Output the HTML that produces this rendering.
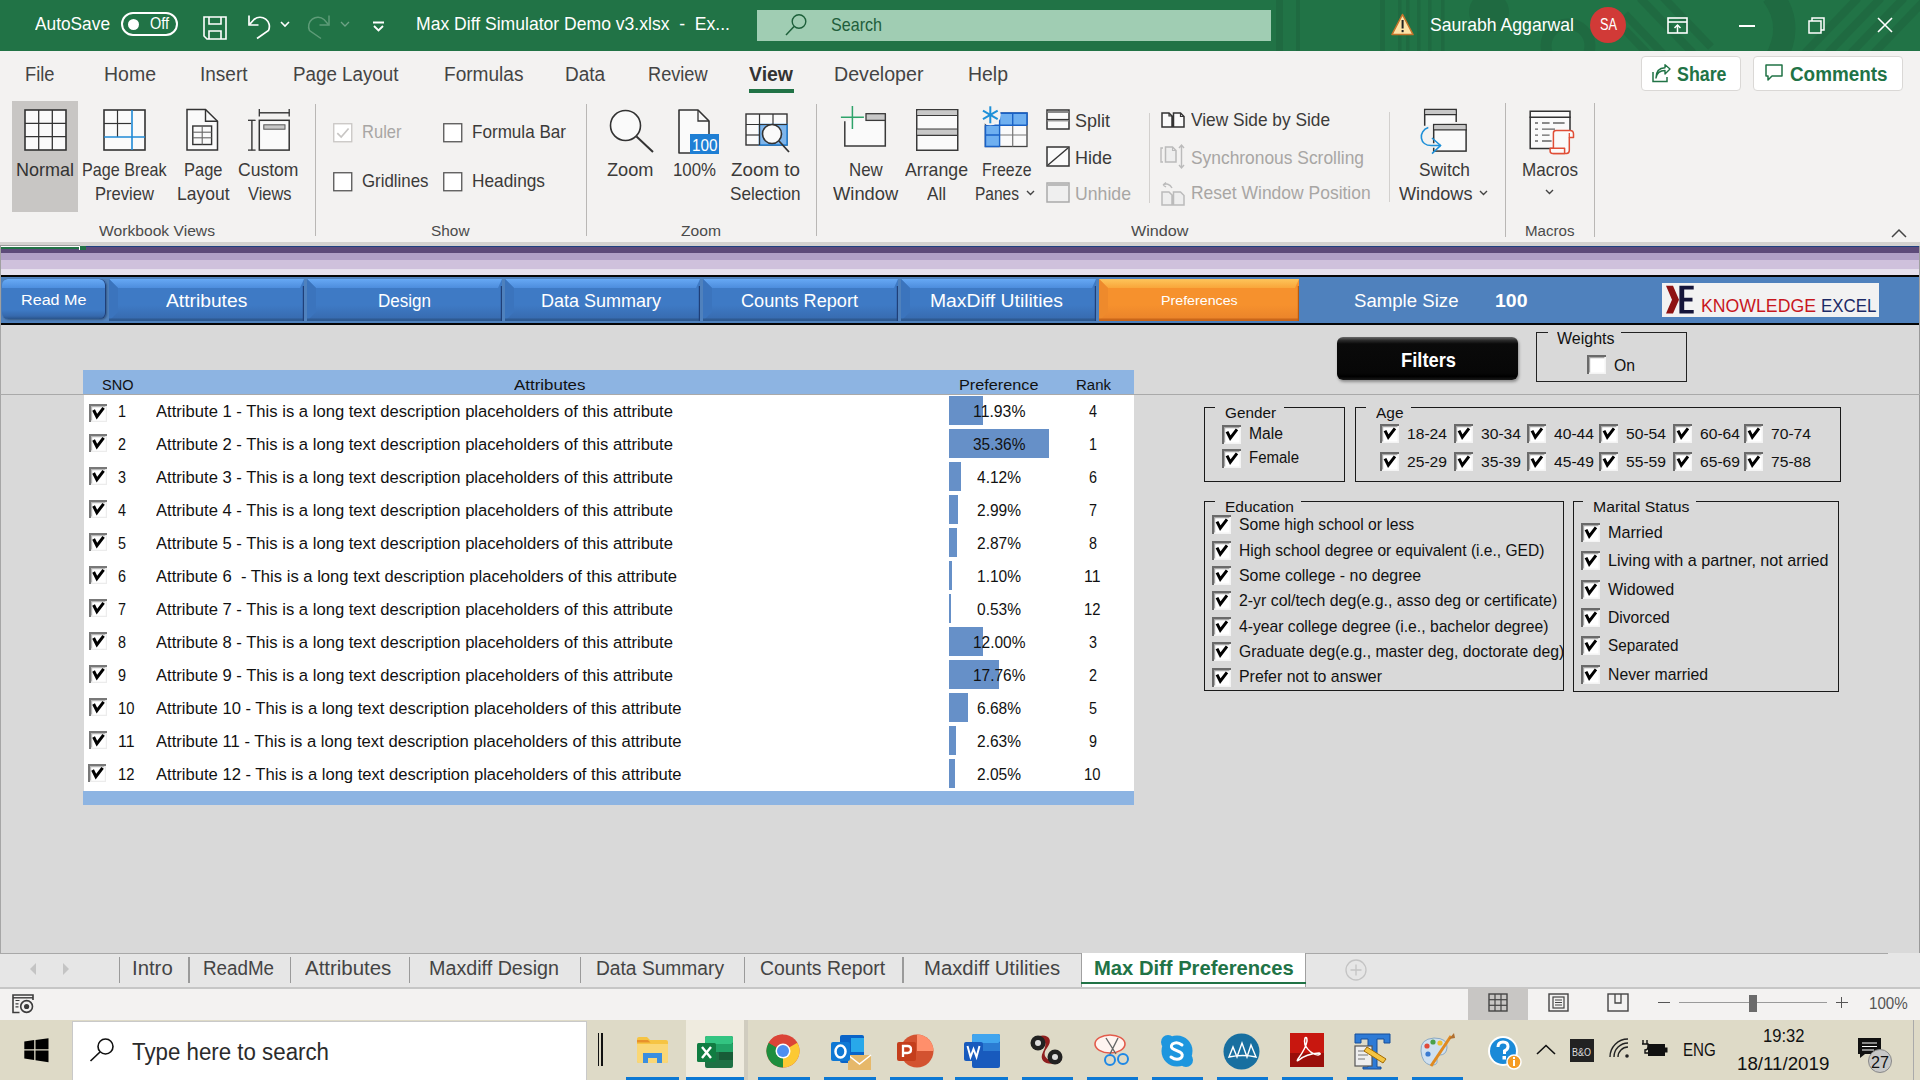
<!DOCTYPE html><html><head><meta charset="utf-8"><style>
html,body{margin:0;padding:0;width:1920px;height:1080px;overflow:hidden;background:#d9d9d9;font-family:"Liberation Sans",sans-serif;}
.t{position:absolute;white-space:pre;line-height:1;transform-origin:0 0;}
svg{overflow:visible}
</style></head><body>
<div style="position:absolute;left:0px;top:0px;width:1920px;height:51px;background:#217346"></div>
<svg style="position:absolute;left:0px;top:0px;" width="1920" height="51" viewBox="0 0 1920 51">
<g fill="#1f6a41">
<rect x="1276" y="0" width="7" height="51"/><rect x="1296" y="0" width="4" height="51"/>
<rect x="1380" y="0" width="5" height="51"/><rect x="1398" y="0" width="3.5" height="51"/><rect x="1406" y="0" width="3.5" height="51"/><rect x="1417" y="0" width="3.5" height="51"/><rect x="1428" y="0" width="3.5" height="51"/><rect x="1441" y="0" width="3.5" height="51"/>
</g>
<circle cx="1489" cy="12" r="20" fill="#1f6a41"/>
<circle cx="1568" cy="46" r="22" fill="none" stroke="#1f6a41" stroke-width="11"/>
<g stroke="#1f6a41" stroke-width="8">
<line x1="1640" y1="-2" x2="1693" y2="53"/><line x1="1658" y1="-8" x2="1711" y2="47"/><line x1="1625" y1="14" x2="1665" y2="56"/><line x1="1625" y1="30" x2="1650" y2="56"/>
<line x1="1805" y1="53" x2="1858" y2="-2"/><line x1="1828" y1="53" x2="1881" y2="-2"/><line x1="1851" y1="53" x2="1904" y2="-2"/><line x1="1874" y1="53" x2="1927" y2="-2"/>
</g>
<path d="M 1772 -5 Q 1795 25 1775 60" fill="none" stroke="#1f6a41" stroke-width="22"/>
</svg>
<span id="t0" class="t" style="transform:scaleX(0.9608);left:35px;top:15.36px;font-size:18px;color:#ffffff;font-weight:400;font-family:'Liberation Sans',sans-serif;">AutoSave</span>
<div style="position:absolute;left:121px;top:12px;width:53px;height:20px;border:2px solid #fff;border-radius:12px"></div>
<div style="position:absolute;left:127.5px;top:18.5px;width:11px;height:11px;border-radius:50%;background:#fff"></div>
<span id="t1" class="t" style="transform:scaleX(0.9027);left:150px;top:15.95px;font-size:16px;color:#ffffff;font-weight:400;font-family:'Liberation Sans',sans-serif;">Off</span>
<svg style="position:absolute;left:203px;top:16px;" width="24" height="24" viewBox="0 0 24 24"><path d="M1 1 H23 V23 H4 L1 20 Z" fill="none" stroke="#fff" stroke-width="1.6"/><path d="M6 1 V8 H18 V1" fill="none" stroke="#fff" stroke-width="1.6"/><path d="M6 23 V15 H18 V23" fill="none" stroke="#fff" stroke-width="1.6"/></svg>
<svg style="position:absolute;left:246px;top:14px;" width="26" height="26" viewBox="0 0 26 26"><path d="M3 1.5 V11 H12.5" fill="none" stroke="#fff" stroke-width="1.7"/><path d="M3.6 10.4 L8 5.5 A9.3 9.3 0 0 1 22.5 16.5 L11 24.5" fill="none" stroke="#fff" stroke-width="1.7"/></svg>
<svg style="position:absolute;left:280px;top:21px;" width="10" height="6" viewBox="0 0 10 6"><path d="M1 1 L5 5 L9 1" fill="none" stroke="#fff" stroke-width="1.6"/></svg>
<svg style="position:absolute;left:307px;top:14px;" width="26" height="26" viewBox="0 0 26 26"><path d="M22 1.5 V11 H12.5" fill="none" stroke="#5e9c78" stroke-width="1.5"/><path d="M21.4 10.4 L17 5.5 A9.3 9.3 0 0 0 2.5 16.5 L14 24.5" fill="none" stroke="#5e9c78" stroke-width="1.5"/></svg>
<svg style="position:absolute;left:340px;top:21px;" width="10" height="6" viewBox="0 0 10 6"><path d="M1 1 L5 5 L9 1" fill="none" stroke="#6fa386" stroke-width="1.3"/></svg>
<svg style="position:absolute;left:372px;top:21px;" width="13" height="11" viewBox="0 0 13 11"><path d="M1 1.5 H12" stroke="#fff" stroke-width="2"/><path d="M2 5 L6.5 9.5 L11 5" fill="none" stroke="#fff" stroke-width="1.8"/></svg>
<span id="t2" class="t" style="transform:scaleX(0.9245);left:415.5px;top:14.21px;font-size:19px;color:#ffffff;font-weight:400;font-family:'Liberation Sans',sans-serif;">Max Diff Simulator Demo v3.xlsx  -  Ex...</span>
<div style="position:absolute;left:757px;top:10px;width:514px;height:30.5px;background:#a0cdb3"></div>
<svg style="position:absolute;left:784px;top:13px;" width="28" height="24" viewBox="0 0 28 24"><circle cx="15" cy="8.5" r="6.8" fill="none" stroke="#1d5f3a" stroke-width="1.4"/><line x1="10" y1="13.5" x2="2" y2="22" stroke="#1d5f3a" stroke-width="1.5"/></svg>
<span id="t3" class="t" style="transform:scaleX(0.8699);left:830.5px;top:16.04px;font-size:18.5px;color:#1f5e3b;font-weight:400;font-family:'Liberation Sans',sans-serif;">Search</span>
<svg style="position:absolute;left:1391px;top:13px;" width="23" height="23" viewBox="0 0 23 23"><path d="M11.5 1.5 L22 21.5 H1 Z" fill="#fde3a7" stroke="#c6742b" stroke-width="1.6" stroke-linejoin="round"/><rect x="10.6" y="7" width="2" height="8.5" fill="#222"/><rect x="10.6" y="17" width="2" height="2.2" fill="#222"/></svg>
<span id="t4" class="t" style="transform:scaleX(0.9524);left:1429.5px;top:16.14px;font-size:18.5px;color:#ffffff;font-weight:400;font-family:'Liberation Sans',sans-serif;">Saurabh Aggarwal</span>
<div style="position:absolute;left:1590px;top:7px;width:36px;height:36px;border-radius:50%;background:#d13a37"></div>
<span id="t5" class="t" style="transform:scaleX(0.7965);left:1599.5px;top:17.45px;font-size:16px;color:#ffffff;font-weight:400;font-family:'Liberation Sans',sans-serif;">SA</span>
<svg style="position:absolute;left:1667px;top:17px;" width="21" height="17" viewBox="0 0 21 17"><rect x="1" y="1" width="19" height="15" fill="none" stroke="#fff" stroke-width="1.6"/><line x1="1" y1="5" x2="20" y2="5" stroke="#fff" stroke-width="1.6"/><line x1="10.5" y1="8" x2="10.5" y2="16" stroke="#fff" stroke-width="1.5"/><path d="M7.5 11 L10.5 8 L13.5 11" fill="none" stroke="#fff" stroke-width="1.5"/></svg>
<div style="position:absolute;left:1739px;top:25px;width:16px;height:1.6px;background:#fff"></div>
<svg style="position:absolute;left:1808px;top:17px;" width="17" height="17" viewBox="0 0 17 17"><rect x="1" y="4" width="12" height="12" fill="none" stroke="#fff" stroke-width="1.5"/><path d="M4 4 V1 H16 V13 H13" fill="none" stroke="#fff" stroke-width="1.5"/></svg>
<svg style="position:absolute;left:1877px;top:17px;" width="16" height="16" viewBox="0 0 16 16"><path d="M1 1 L15 15 M15 1 L1 15" stroke="#fff" stroke-width="1.6"/></svg>
<div style="position:absolute;left:0px;top:51px;width:1920px;height:191px;background:#f3f2f1"></div>
<span id="t6" class="t" style="transform:scaleX(0.9152);left:25.3px;top:64.07px;font-size:20px;color:#444;font-weight:400;font-family:'Liberation Sans',sans-serif;">File</span>
<span id="t7" class="t" style="transform:scaleX(0.9745);left:103.5px;top:64.07px;font-size:20px;color:#444;font-weight:400;font-family:'Liberation Sans',sans-serif;">Home</span>
<span id="t8" class="t" style="transform:scaleX(0.9494);left:200px;top:64.07px;font-size:20px;color:#444;font-weight:400;font-family:'Liberation Sans',sans-serif;">Insert</span>
<span id="t9" class="t" style="transform:scaleX(0.9392);left:293.3px;top:64.07px;font-size:20px;color:#444;font-weight:400;font-family:'Liberation Sans',sans-serif;">Page Layout</span>
<span id="t10" class="t" style="transform:scaleX(0.9537);left:443.5px;top:64.07px;font-size:20px;color:#444;font-weight:400;font-family:'Liberation Sans',sans-serif;">Formulas</span>
<span id="t11" class="t" style="transform:scaleX(0.9515);left:565.3px;top:64.07px;font-size:20px;color:#444;font-weight:400;font-family:'Liberation Sans',sans-serif;">Data</span>
<span id="t12" class="t" style="transform:scaleX(0.9088);left:647.7px;top:64.07px;font-size:20px;color:#444;font-weight:400;font-family:'Liberation Sans',sans-serif;">Review</span>
<span id="t13" class="t" style="transform:scaleX(0.9817);left:834.4px;top:64.07px;font-size:20px;color:#444;font-weight:400;font-family:'Liberation Sans',sans-serif;">Developer</span>
<span id="t14" class="t" style="transform:scaleX(0.9723);left:967.5px;top:64.07px;font-size:20px;color:#444;font-weight:400;font-family:'Liberation Sans',sans-serif;">Help</span>
<span id="t15" class="t" style="transform:scaleX(0.9730);left:749px;top:64.07px;font-size:20px;color:#333;font-weight:700;font-family:'Liberation Sans',sans-serif;">View</span>
<div style="position:absolute;left:749px;top:88.5px;width:45px;height:4.5px;background:#217346"></div>
<div style="position:absolute;left:1640.5px;top:55.5px;width:98px;height:33px;background:#fff;border:1px solid #dad8d6;border-radius:4px"></div>
<svg style="position:absolute;left:1651px;top:64px;" width="20" height="19" viewBox="0 0 20 19"><path d="M2 8 V17.5 H16 V13" fill="none" stroke="#217346" stroke-width="1.5"/><path d="M5 14 C6 8 10 6.5 14 6.5 V10 L19 5 L14 0.8 V3.8 C8 4 5 8 5 14 Z" fill="none" stroke="#217346" stroke-width="1.4" stroke-linejoin="round"/></svg>
<span id="t16" class="t" style="transform:scaleX(0.9132);left:1676.6px;top:64.69px;font-size:19.5px;color:#217346;font-weight:700;font-family:'Liberation Sans',sans-serif;">Share</span>
<div style="position:absolute;left:1753px;top:55.5px;width:147.5px;height:33px;background:#fff;border:1px solid #dad8d6;border-radius:4px"></div>
<svg style="position:absolute;left:1765px;top:64px;" width="18" height="18" viewBox="0 0 18 18"><path d="M1 1 H17 V12 H7 L3 16 V12 H1 Z" fill="none" stroke="#217346" stroke-width="1.5" stroke-linejoin="round"/></svg>
<span id="t17" class="t" style="transform:scaleX(0.9674);left:1789.5px;top:64.69px;font-size:19.5px;color:#217346;font-weight:700;font-family:'Liberation Sans',sans-serif;">Comments</span>
<div style="position:absolute;left:12px;top:101px;width:66px;height:111px;background:#c8c6c4"></div>
<svg style="position:absolute;left:24px;top:109px;" width="43" height="42" viewBox="0 0 43 42"><rect x="1" y="1" width="41" height="40" fill="#fafafa" stroke="#333" stroke-width="1.6"/><line x1="14.7" y1="1" x2="14.7" y2="41" stroke="#333" stroke-width="1.3"/><line x1="28.3" y1="1" x2="28.3" y2="41" stroke="#333" stroke-width="1.3"/><line x1="1" y1="14.3" x2="42" y2="14.3" stroke="#333" stroke-width="1.3"/><line x1="1" y1="27.7" x2="42" y2="27.7" stroke="#333" stroke-width="1.3"/></svg>
<span id="t18" class="t" style="transform:scaleX(0.9472);left:15.6px;top:159.71px;font-size:19px;color:#333;font-weight:400;font-family:'Liberation Sans',sans-serif;">Normal</span>
<svg style="position:absolute;left:103px;top:109px;" width="43" height="42" viewBox="0 0 43 42"><rect x="1" y="1" width="41" height="40" fill="#fafafa" stroke="#333" stroke-width="1.6"/><line x1="1" y1="14.5" x2="28" y2="14.5" stroke="#333" stroke-width="1.2"/><line x1="14.5" y1="1" x2="14.5" y2="28" stroke="#333" stroke-width="1.2"/><line x1="29" y1="1" x2="29" y2="41" stroke="#1f8ad6" stroke-width="1.6"/><line x1="1" y1="28" x2="42" y2="28" stroke="#1f8ad6" stroke-width="1.6"/></svg>
<span id="t19" class="t" style="transform:scaleX(0.8510);left:82px;top:159.71px;font-size:19px;color:#3b3a39;font-weight:400;font-family:'Liberation Sans',sans-serif;">Page Break</span>
<span id="t20" class="t" style="transform:scaleX(0.8731);left:94.7px;top:183.51px;font-size:19px;color:#3b3a39;font-weight:400;font-family:'Liberation Sans',sans-serif;">Preview</span>
<svg style="position:absolute;left:180px;top:100px;" width="50" height="55" viewBox="0 0 50 55"><path d="M7 9.5 H25.5 L37.5 21.3 V50 H7 Z" fill="#fafafa" stroke="#333" stroke-width="1.5" stroke-linejoin="miter"/><path d="M25.5 9.5 V21.3 H37.5" fill="none" stroke="#333" stroke-width="1.4"/><rect x="12.8" y="26" width="18.8" height="18.5" fill="#fafafa" stroke="#333" stroke-width="1.4"/><line x1="12.8" y1="32.2" x2="31.6" y2="32.2" stroke="#666" stroke-width="1.1"/><line x1="12.8" y1="37.8" x2="31.6" y2="37.8" stroke="#666" stroke-width="1.1"/><line x1="22.2" y1="26" x2="22.2" y2="44.5" stroke="#666" stroke-width="1.1"/></svg>
<span id="t21" class="t" style="transform:scaleX(0.8676);left:184px;top:159.71px;font-size:19px;color:#3b3a39;font-weight:400;font-family:'Liberation Sans',sans-serif;">Page</span>
<span id="t22" class="t" style="transform:scaleX(0.9203);left:176.5px;top:183.51px;font-size:19px;color:#3b3a39;font-weight:400;font-family:'Liberation Sans',sans-serif;">Layout</span>
<svg style="position:absolute;left:240px;top:100px;" width="55" height="55" viewBox="0 0 55 55"><line x1="11.9" y1="20.1" x2="11.9" y2="50.3" stroke="#333" stroke-width="1.4"/><line x1="8" y1="20.3" x2="15.6" y2="20.3" stroke="#333" stroke-width="1.3"/><line x1="8" y1="50.1" x2="15.6" y2="50.1" stroke="#333" stroke-width="1.3"/><line x1="19" y1="12.8" x2="49.5" y2="12.8" stroke="#333" stroke-width="1.4"/><line x1="19.3" y1="9" x2="19.3" y2="16.5" stroke="#333" stroke-width="1.3"/><line x1="49.2" y1="9" x2="49.2" y2="16.5" stroke="#333" stroke-width="1.3"/><rect x="19.3" y="20.3" width="29.9" height="29.8" fill="#fafafa" stroke="#333" stroke-width="1.5"/><rect x="23.8" y="24.8" width="21.2" height="4.4" fill="#c8c8c8" stroke="#555" stroke-width="1"/></svg>
<span id="t23" class="t" style="transform:scaleX(0.9241);left:238px;top:159.71px;font-size:19px;color:#3b3a39;font-weight:400;font-family:'Liberation Sans',sans-serif;">Custom</span>
<span id="t24" class="t" style="transform:scaleX(0.8641);left:247.5px;top:183.51px;font-size:19px;color:#3b3a39;font-weight:400;font-family:'Liberation Sans',sans-serif;">Views</span>
<span id="t25" class="t" style="transform:scaleX(1.0232);left:99.4px;top:223.05px;font-size:15.3px;color:#4a4a4a;font-weight:400;font-family:'Liberation Sans',sans-serif;">Workbook Views</span>
<div style="position:absolute;left:314.5px;top:104px;width:1.6px;height:132px;background:#b9b7b5"></div>
<div style="position:absolute;left:585.5px;top:104px;width:1.6px;height:132px;background:#b9b7b5"></div>
<div style="position:absolute;left:815.5px;top:104px;width:1.6px;height:132px;background:#b9b7b5"></div>
<div style="position:absolute;left:1504.5px;top:103px;width:1.6px;height:134px;background:#b9b7b5"></div>
<div style="position:absolute;left:1593.5px;top:103px;width:1.6px;height:134px;background:#b9b7b5"></div>
<div style="position:absolute;left:1388.5px;top:112px;width:1.2px;height:90px;background:#d2d0ce"></div>
<div style="position:absolute;left:1149px;top:113px;width:1.2px;height:90px;background:#d2d0ce"></div>
<svg style="position:absolute;left:333px;top:122.5px;" width="19.5" height="19.5" viewBox="0 0 19.5 19.5"><rect x="0.75" y="0.75" width="18.0" height="18.0" fill="#fff" stroke="#c8c6c4" stroke-width="1.3"/><path d="M4.3 10.1 L8.2 14.0 L15.6 5.5" fill="none" stroke="#c8c6c4" stroke-width="1.7"/></svg>
<span id="t26" class="t" style="transform:scaleX(0.8933);left:361.6px;top:122.94px;font-size:18.5px;color:#a8a6a4;font-weight:400;font-family:'Liberation Sans',sans-serif;">Ruler</span>
<svg style="position:absolute;left:443px;top:122.5px;" width="19.5" height="19.5" viewBox="0 0 19.5 19.5"><rect x="0.75" y="0.75" width="18.0" height="18.0" fill="#fff" stroke="#555" stroke-width="1.3"/></svg>
<span id="t27" class="t" style="transform:scaleX(0.9235);left:472px;top:122.94px;font-size:18.5px;color:#3b3a39;font-weight:400;font-family:'Liberation Sans',sans-serif;">Formula Bar</span>
<svg style="position:absolute;left:333px;top:171.5px;" width="19.5" height="19.5" viewBox="0 0 19.5 19.5"><rect x="0.75" y="0.75" width="18.0" height="18.0" fill="#fff" stroke="#555" stroke-width="1.3"/></svg>
<span id="t28" class="t" style="transform:scaleX(0.9110);left:361.6px;top:172.14px;font-size:18.5px;color:#3b3a39;font-weight:400;font-family:'Liberation Sans',sans-serif;">Gridlines</span>
<svg style="position:absolute;left:443px;top:171.5px;" width="19.5" height="19.5" viewBox="0 0 19.5 19.5"><rect x="0.75" y="0.75" width="18.0" height="18.0" fill="#fff" stroke="#555" stroke-width="1.3"/></svg>
<span id="t29" class="t" style="transform:scaleX(0.9338);left:472px;top:172.14px;font-size:18.5px;color:#3b3a39;font-weight:400;font-family:'Liberation Sans',sans-serif;">Headings</span>
<span id="t30" class="t" style="transform:scaleX(1.0061);left:431px;top:223.05px;font-size:15.3px;color:#4a4a4a;font-weight:400;font-family:'Liberation Sans',sans-serif;">Show</span>
<svg style="position:absolute;left:609px;top:109px;" width="46" height="44" viewBox="0 0 46 44"><circle cx="16.5" cy="16.5" r="15" fill="#fafafa" stroke="#333" stroke-width="1.6"/><line x1="27.5" y1="27.5" x2="44" y2="43" stroke="#333" stroke-width="2"/></svg>
<span id="t31" class="t" style="transform:scaleX(0.9572);left:607px;top:159.71px;font-size:19px;color:#3b3a39;font-weight:400;font-family:'Liberation Sans',sans-serif;">Zoom</span>
<svg style="position:absolute;left:678px;top:109px;" width="42" height="45" viewBox="0 0 42 45"><path d="M1 1 H20 L31 12 V44 H1 Z" fill="#fafafa" stroke="#333" stroke-width="1.6" stroke-linejoin="round"/><path d="M20 1 V12 H31" fill="none" stroke="#333" stroke-width="1.3"/><rect x="12" y="25" width="29" height="20" fill="#1f7fd4"/></svg>
<span id="t32" class="t" style="transform:scaleX(0.8987);left:691.5px;top:136.61px;font-size:17px;color:#fff;font-weight:400;font-family:'Liberation Sans',sans-serif;">100</span>
<span id="t33" class="t" style="transform:scaleX(0.8846);left:673px;top:159.71px;font-size:19px;color:#3b3a39;font-weight:400;font-family:'Liberation Sans',sans-serif;">100%</span>
<svg style="position:absolute;left:745px;top:113px;" width="46" height="42" viewBox="0 0 46 42"><rect x="1" y="1" width="41" height="31" fill="#fafafa" stroke="#333" stroke-width="1.4"/><rect x="14.5" y="11.5" width="27.5" height="20.5" fill="#7fb5ea" stroke="#1f7fd4" stroke-width="1.5"/><line x1="1" y1="11.5" x2="42" y2="11.5" stroke="#333" stroke-width="1.2"/><line x1="1" y1="22" x2="14" y2="22" stroke="#333" stroke-width="1.2"/><line x1="14.5" y1="1" x2="14.5" y2="32" stroke="#333" stroke-width="1.2"/><line x1="28" y1="1" x2="28" y2="11" stroke="#333" stroke-width="1.2"/><circle cx="27" cy="21" r="9.5" fill="#fafafa" stroke="#333" stroke-width="1.6"/><line x1="34" y1="28" x2="44" y2="39" stroke="#333" stroke-width="1.8"/></svg>
<span id="t34" class="t" style="transform:scaleX(0.9899);left:731px;top:159.71px;font-size:19px;color:#3b3a39;font-weight:400;font-family:'Liberation Sans',sans-serif;">Zoom to</span>
<span id="t35" class="t" style="transform:scaleX(0.9019);left:730px;top:183.51px;font-size:19px;color:#3b3a39;font-weight:400;font-family:'Liberation Sans',sans-serif;">Selection</span>
<span id="t36" class="t" style="transform:scaleX(1.0228);left:681px;top:223.05px;font-size:15.3px;color:#4a4a4a;font-weight:400;font-family:'Liberation Sans',sans-serif;">Zoom</span>
<svg style="position:absolute;left:830px;top:100px;" width="60" height="50" viewBox="0 0 60 50"><path d="M14.8 21.3 V46 H55.3 V13.7" fill="#fafafa" stroke="#3a3a3a" stroke-width="1.5"/><rect x="36" y="13.7" width="19.3" height="6.7" fill="#c8c8c8" stroke="#3a3a3a" stroke-width="1.3"/><path d="M10.9 17.2 H33.9 M22.4 6 V29" stroke="#2ea36a" stroke-width="1.5"/></svg>
<span id="t37" class="t" style="transform:scaleX(0.8865);left:848.8px;top:159.71px;font-size:19px;color:#3b3a39;font-weight:400;font-family:'Liberation Sans',sans-serif;">New</span>
<span id="t38" class="t" style="transform:scaleX(0.9663);left:832.5px;top:183.51px;font-size:19px;color:#3b3a39;font-weight:400;font-family:'Liberation Sans',sans-serif;">Window</span>
<svg style="position:absolute;left:916px;top:109px;" width="43" height="42" viewBox="0 0 43 42"><rect x="0.75" y="0.75" width="41" height="40.5" fill="#fafafa" stroke="#3a3a3a" stroke-width="1.5"/><rect x="1.5" y="1.5" width="39.5" height="5" fill="#c8c8c8"/><line x1="0.75" y1="6.5" x2="41.75" y2="6.5" stroke="#3a3a3a" stroke-width="1.2"/><rect x="1.5" y="20" width="39.5" height="6" fill="#c8c8c8"/><line x1="0.75" y1="20" x2="41.75" y2="20" stroke="#3a3a3a" stroke-width="1.2"/><line x1="0.75" y1="26.3" x2="41.75" y2="26.3" stroke="#3a3a3a" stroke-width="1.2"/></svg>
<span id="t39" class="t" style="transform:scaleX(0.9318);left:905px;top:159.71px;font-size:19px;color:#3b3a39;font-weight:400;font-family:'Liberation Sans',sans-serif;">Arrange</span>
<span id="t40" class="t" style="transform:scaleX(0.8994);left:927px;top:183.51px;font-size:19px;color:#3b3a39;font-weight:400;font-family:'Liberation Sans',sans-serif;">All</span>
<svg style="position:absolute;left:980px;top:100px;" width="50" height="50" viewBox="0 0 50 50"><rect x="5.4" y="13.1" width="41.6" height="33.4" fill="#fafafa" stroke="#444" stroke-width="1.3"/><path d="M19.6 13.1 H47 V25.2 H19.6 Z M5.4 25.2 H19.6 V46.5 H5.4 Z" fill="#6fb0f0"/><path d="M19.6 35 H47 M32.7 25.2 V46.5" stroke="#777" stroke-width="1.2"/><path d="M19.6 13.1 V46.5 M5.4 25.2 H47 M32.7 13.1 V25.2 M5.4 35 H19.6" stroke="#1a62c6" stroke-width="1.4"/><path d="M5.4 25.2 V46.5 H19.6 M19.6 13.1 H47 V25.2" fill="none" stroke="#1a62c6" stroke-width="1.6"/><circle cx="10.3" cy="14.8" r="10.5" fill="#f3f2f1"/><g stroke="#1e90d8" stroke-width="2"><line x1="10.3" y1="14.8" x2="10.30" y2="6.30"/><line x1="10.3" y1="14.8" x2="2.94" y2="10.55"/><line x1="10.3" y1="14.8" x2="2.94" y2="19.05"/><line x1="10.3" y1="14.8" x2="10.30" y2="23.30"/><line x1="10.3" y1="14.8" x2="17.66" y2="19.05"/><line x1="10.3" y1="14.8" x2="17.66" y2="10.55"/></g></svg>
<span id="t41" class="t" style="transform:scaleX(0.8370);left:981.5px;top:159.71px;font-size:19px;color:#3b3a39;font-weight:400;font-family:'Liberation Sans',sans-serif;">Freeze</span>
<span id="t42" class="t" style="transform:scaleX(0.8167);left:975px;top:183.51px;font-size:19px;color:#3b3a39;font-weight:400;font-family:'Liberation Sans',sans-serif;">Panes</span>
<svg style="position:absolute;left:1026px;top:190px;" width="9" height="6" viewBox="0 0 9 6"><path d="M1 1 L4.5 4.5 L8 1" fill="none" stroke="#444" stroke-width="1.4"/></svg>
<svg style="position:absolute;left:1046px;top:109px;" width="24" height="21" viewBox="0 0 24 21"><rect x="1" y="1" width="22" height="19" fill="#fafafa" stroke="#333" stroke-width="1.5"/><rect x="1.5" y="2" width="21" height="2" fill="#888"/><line x1="1" y1="10.5" x2="23" y2="10.5" stroke="#333" stroke-width="1.2"/><rect x="1.5" y="11" width="21" height="1.5" fill="#999"/></svg>
<span id="t43" class="t" style="transform:scaleX(0.9467);left:1075px;top:110.71px;font-size:19px;color:#3b3a39;font-weight:400;font-family:'Liberation Sans',sans-serif;">Split</span>
<svg style="position:absolute;left:1046px;top:146px;" width="24" height="21" viewBox="0 0 24 21"><rect x="1" y="1" width="22" height="19" fill="#fafafa" stroke="#333" stroke-width="1.5"/><line x1="2" y1="19" x2="22" y2="2" stroke="#333" stroke-width="1.4"/></svg>
<span id="t44" class="t" style="transform:scaleX(0.9468);left:1075px;top:147.71px;font-size:19px;color:#3b3a39;font-weight:400;font-family:'Liberation Sans',sans-serif;">Hide</span>
<svg style="position:absolute;left:1046px;top:182px;" width="24" height="21" viewBox="0 0 24 21"><rect x="1" y="1" width="22" height="19" fill="#efefef" stroke="#aaa" stroke-width="1.5"/><rect x="1.5" y="1.5" width="21" height="2.5" fill="#bbb"/></svg>
<span id="t45" class="t" style="transform:scaleX(0.9299);left:1075px;top:183.71px;font-size:19px;color:#a8a6a4;font-weight:400;font-family:'Liberation Sans',sans-serif;">Unhide</span>
<svg style="position:absolute;left:1161px;top:112px;" width="24" height="16" viewBox="0 0 24 16"><path d="M1 1 H8 L11 4 V15 H1 Z M12.5 1 H19.5 L23 4.5 V15 H12.5 Z" fill="#fafafa" stroke="#333" stroke-width="1.5" stroke-linejoin="miter"/><path d="M8 1 V4 H11 M19.5 1 V4.5 H23" fill="none" stroke="#333" stroke-width="1.2"/></svg>
<span id="t46" class="t" style="transform:scaleX(0.9503);left:1190.8px;top:111.49px;font-size:18.2px;color:#3b3a39;font-weight:400;font-family:'Liberation Sans',sans-serif;">View Side by Side</span>
<svg style="position:absolute;left:1160px;top:144px;" width="25" height="25" viewBox="0 0 25 25"><path d="M3 4 H1 V18 H3" fill="none" stroke="#bbb" stroke-width="1.4"/><path d="M5.5 3 H12.5 L16 6.5 V18 H5.5 Z" fill="#eee" stroke="#bbb" stroke-width="1.5"/><path d="M12.5 3 V6.5 H16" fill="none" stroke="#bbb" stroke-width="1.1"/><path d="M21.5 1 V24 M19 4 L21.5 1 L24 4 M19 21 L21.5 24 L24 21" fill="none" stroke="#bbb" stroke-width="1.4"/></svg>
<span id="t47" class="t" style="transform:scaleX(0.9560);left:1190.8px;top:148.79px;font-size:18.2px;color:#a8a6a4;font-weight:400;font-family:'Liberation Sans',sans-serif;">Synchronous Scrolling</span>
<svg style="position:absolute;left:1161px;top:181px;" width="24" height="24" viewBox="0 0 24 24"><path d="M1 11 H8 L11 14 V24 H1 Z M12.5 11 H19.5 L23 14.5 V24 H12.5 Z" fill="#eee" stroke="#bbb" stroke-width="1.5"/><path d="M11 7 C9 3 5 2 2 4 M2 4 L5 1.5 M2 4 L5 6" fill="none" stroke="#bbb" stroke-width="1.4"/></svg>
<span id="t48" class="t" style="transform:scaleX(0.9609);left:1190.8px;top:184.39px;font-size:18.2px;color:#a8a6a4;font-weight:400;font-family:'Liberation Sans',sans-serif;">Reset Window Position</span>
<svg style="position:absolute;left:1410px;top:100px;" width="70" height="60" viewBox="0 0 70 60"><path d="M14.7 25.8 V9.6 H46.2 V22" fill="#fafafa" stroke="#333" stroke-width="1.5"/><rect x="15.4" y="10.3" width="30.1" height="4.2" fill="#c8c8c8"/><line x1="14" y1="14.6" x2="46.9" y2="14.6" stroke="#333" stroke-width="1.3"/><rect x="23.7" y="24.6" width="32.4" height="26.5" fill="#fafafa" stroke="#333" stroke-width="1.5"/><rect x="24.4" y="25.3" width="31" height="4.5" fill="#c8c8c8"/><line x1="23" y1="29.8" x2="56.9" y2="29.8" stroke="#333" stroke-width="1.3"/><path d="M18.3 27.6 C8 31 9 46 22 45.5 H31" fill="none" stroke="#f3f2f1" stroke-width="4.5"/><path d="M18.3 27.6 C8 31 9 46 22 45.5 H31" fill="none" stroke="#1e90d8" stroke-width="1.6"/><path d="M22 38 L30.5 45.5 L22 53.7" fill="none" stroke="#1e90d8" stroke-width="1.6"/></svg>
<span id="t49" class="t" style="transform:scaleX(0.9112);left:1419px;top:159.71px;font-size:19px;color:#3b3a39;font-weight:400;font-family:'Liberation Sans',sans-serif;">Switch</span>
<span id="t50" class="t" style="transform:scaleX(0.9536);left:1399px;top:183.51px;font-size:19px;color:#3b3a39;font-weight:400;font-family:'Liberation Sans',sans-serif;">Windows</span>
<svg style="position:absolute;left:1479px;top:190px;" width="9" height="6" viewBox="0 0 9 6"><path d="M1 1 L4.5 4.5 L8 1" fill="none" stroke="#444" stroke-width="1.4"/></svg>
<span id="t51" class="t" style="transform:scaleX(1.0569);left:1131px;top:223.05px;font-size:15.3px;color:#4a4a4a;font-weight:400;font-family:'Liberation Sans',sans-serif;">Window</span>
<svg style="position:absolute;left:1520px;top:100px;" width="60" height="60" viewBox="0 0 60 60"><path d="M42 48.5 H10.2 V11.2 H50 V31" fill="#fafafa" stroke="#333" stroke-width="1.5"/><line x1="9.5" y1="17.3" x2="50.7" y2="17.3" stroke="#333" stroke-width="1.5"/><g stroke="#666" stroke-width="1.3"><path d="M15 23 H18 M22 23 H29.6 M33 23 H44.6"/><path d="M15 29.1 H18 M22 29.1 H35"/><path d="M15 35.1 H18 M22 35.1 H29.6"/><path d="M15 41 H18 M22 41 H31.6"/></g><path d="M33.4 53.4 V33 Q33.4 30.5 36 30.5 H50 Q53.5 30.5 53.5 34 V37.5 H49.3 V50.5 Q49.3 53.4 46.5 53.4 Z" fill="#fafafa" stroke="#e04e36" stroke-width="1.5" stroke-linejoin="round"/><path d="M49.3 37.5 V33" fill="none" stroke="#e04e36" stroke-width="1.3"/><path d="M30.1 48.3 H44.6 V53.4 H32.5 Q30.1 53.4 30.1 51 Z" fill="#fafafa" stroke="#e04e36" stroke-width="1.5" stroke-linejoin="round"/></svg>
<span id="t52" class="t" style="transform:scaleX(0.8989);left:1522px;top:159.71px;font-size:19px;color:#3b3a39;font-weight:400;font-family:'Liberation Sans',sans-serif;">Macros</span>
<svg style="position:absolute;left:1545px;top:189px;" width="9" height="6" viewBox="0 0 9 6"><path d="M1 1 L4.5 4.5 L8 1" fill="none" stroke="#444" stroke-width="1.4"/></svg>
<span id="t53" class="t" style="transform:scaleX(0.9869);left:1524.5px;top:223.05px;font-size:15.3px;color:#4a4a4a;font-weight:400;font-family:'Liberation Sans',sans-serif;">Macros</span>
<svg style="position:absolute;left:1891px;top:229px;" width="16" height="9" viewBox="0 0 16 9"><path d="M1 8 L8 1 L15 8" fill="none" stroke="#444" stroke-width="1.5"/></svg>
<div style="position:absolute;left:0px;top:242px;width:1920px;height:4px;background:#d3d1cf"></div>
<div style="position:absolute;left:0px;top:246px;width:1920px;height:7px;background:#5d4a7a"></div>
<div style="position:absolute;left:86px;top:246px;width:1834px;height:1px;background:#1f4080"></div>
<div style="position:absolute;left:0px;top:245px;width:80px;height:1px;background:#9a9a9a"></div>
<div style="position:absolute;left:0px;top:246px;width:79px;height:1px;background:#fff"></div>
<div style="position:absolute;left:0px;top:247px;width:78.5px;height:2px;background:#217346"></div>
<div style="position:absolute;left:79.2px;top:246px;width:1px;height:4px;background:#fff"></div>
<div style="position:absolute;left:80.3px;top:246px;width:5.7px;height:4px;background:#217346"></div>
<div style="position:absolute;left:0px;top:253px;width:1920px;height:7px;background:#b1a0c7"></div>
<div style="position:absolute;left:0px;top:260px;width:1920px;height:9px;background:#cfc1dc"></div>
<div style="position:absolute;left:0px;top:269px;width:1920px;height:6px;background:#e6e0ed"></div>
<div style="position:absolute;left:0px;top:275px;width:1920px;height:2px;background:#050505"></div>
<div style="position:absolute;left:0px;top:277px;width:1920px;height:46px;background:#4f81bd"></div>
<div style="position:absolute;left:0px;top:323px;width:1920px;height:2px;background:#050505"></div>
<div style="position:absolute;left:0px;top:246px;width:1px;height:79px;background:#a0a0a0"></div>
<div style="position:absolute;left:1919px;top:246px;width:1px;height:707px;background:#a0a0a0"></div>
<div style="position:absolute;left:1.5px;top:278.6px;width:104px;height:40px;border-radius:6px;background:linear-gradient(#68aaf5 0px,#4f90e0 8.5px,#3e7ac5 9px,#3e7ac5 31px,#3669ad 37px,#2a548a 40px);box-shadow:inset -1px 0 0 #1f3f78, 1px 1px 2px rgba(0,0,0,.3)"></div>
<span id="t54" class="t" style="transform:scaleX(1.0626);left:20.8px;top:292.33px;font-size:15.2px;color:#fff;font-weight:400;font-family:'Liberation Sans',sans-serif;">Read Me</span>
<svg style="position:absolute;left:109px;top:279px;" width="196" height="42" viewBox="0 0 196 42"><defs><linearGradient id="g109a" x1="0" y1="0" x2="0" y2="1"><stop offset="0" stop-color="#66a8f4"/><stop offset="1" stop-color="#4d8ddd"/></linearGradient><linearGradient id="g109b" x1="0" y1="0" x2="0" y2="1"><stop offset="0" stop-color="#3e7ac5"/><stop offset="0.62" stop-color="#3e7ac5"/><stop offset="1" stop-color="#3669ad"/></linearGradient></defs><rect x="0" y="0" width="195" height="42" fill="url(#g109b)"/><path d="M0 0 H195 L191 9 H9 Z" fill="url(#g109a)"/><path d="M0 0 L9 9 V33 L0 42 Z" fill="#3b74bd"/><rect x="0" y="39.5" width="195" height="2.5" fill="#2e5a92"/><rect x="193.8" y="7" width="1.2" height="35" fill="#1f3f78"/></svg>
<span id="t55" class="t" style="transform:scaleX(1.0297);left:165.9px;top:291.57px;font-size:18.7px;color:#fff;font-weight:400;font-family:'Liberation Sans',sans-serif;">Attributes</span>
<svg style="position:absolute;left:307px;top:279px;" width="196" height="42" viewBox="0 0 196 42"><defs><linearGradient id="g307a" x1="0" y1="0" x2="0" y2="1"><stop offset="0" stop-color="#66a8f4"/><stop offset="1" stop-color="#4d8ddd"/></linearGradient><linearGradient id="g307b" x1="0" y1="0" x2="0" y2="1"><stop offset="0" stop-color="#3e7ac5"/><stop offset="0.62" stop-color="#3e7ac5"/><stop offset="1" stop-color="#3669ad"/></linearGradient></defs><rect x="0" y="0" width="195" height="42" fill="url(#g307b)"/><path d="M0 0 H195 L191 9 H9 Z" fill="url(#g307a)"/><path d="M0 0 L9 9 V33 L0 42 Z" fill="#3b74bd"/><rect x="0" y="39.5" width="195" height="2.5" fill="#2e5a92"/><rect x="193.8" y="7" width="1.2" height="35" fill="#1f3f78"/></svg>
<span id="t56" class="t" style="transform:scaleX(0.9111);left:378px;top:291.57px;font-size:18.7px;color:#fff;font-weight:400;font-family:'Liberation Sans',sans-serif;">Design</span>
<svg style="position:absolute;left:505px;top:279px;" width="196" height="42" viewBox="0 0 196 42"><defs><linearGradient id="g505a" x1="0" y1="0" x2="0" y2="1"><stop offset="0" stop-color="#66a8f4"/><stop offset="1" stop-color="#4d8ddd"/></linearGradient><linearGradient id="g505b" x1="0" y1="0" x2="0" y2="1"><stop offset="0" stop-color="#3e7ac5"/><stop offset="0.62" stop-color="#3e7ac5"/><stop offset="1" stop-color="#3669ad"/></linearGradient></defs><rect x="0" y="0" width="195" height="42" fill="url(#g505b)"/><path d="M0 0 H195 L191 9 H9 Z" fill="url(#g505a)"/><path d="M0 0 L9 9 V33 L0 42 Z" fill="#3b74bd"/><rect x="0" y="39.5" width="195" height="2.5" fill="#2e5a92"/><rect x="193.8" y="7" width="1.2" height="35" fill="#1f3f78"/></svg>
<span id="t57" class="t" style="transform:scaleX(0.9629);left:541.2px;top:291.57px;font-size:18.7px;color:#fff;font-weight:400;font-family:'Liberation Sans',sans-serif;">Data Summary</span>
<svg style="position:absolute;left:703px;top:279px;" width="196" height="42" viewBox="0 0 196 42"><defs><linearGradient id="g703a" x1="0" y1="0" x2="0" y2="1"><stop offset="0" stop-color="#66a8f4"/><stop offset="1" stop-color="#4d8ddd"/></linearGradient><linearGradient id="g703b" x1="0" y1="0" x2="0" y2="1"><stop offset="0" stop-color="#3e7ac5"/><stop offset="0.62" stop-color="#3e7ac5"/><stop offset="1" stop-color="#3669ad"/></linearGradient></defs><rect x="0" y="0" width="195" height="42" fill="url(#g703b)"/><path d="M0 0 H195 L191 9 H9 Z" fill="url(#g703a)"/><path d="M0 0 L9 9 V33 L0 42 Z" fill="#3b74bd"/><rect x="0" y="39.5" width="195" height="2.5" fill="#2e5a92"/><rect x="193.8" y="7" width="1.2" height="35" fill="#1f3f78"/></svg>
<span id="t58" class="t" style="transform:scaleX(0.9710);left:740.5px;top:291.57px;font-size:18.7px;color:#fff;font-weight:400;font-family:'Liberation Sans',sans-serif;">Counts Report</span>
<svg style="position:absolute;left:901px;top:279px;" width="196" height="42" viewBox="0 0 196 42"><defs><linearGradient id="g901a" x1="0" y1="0" x2="0" y2="1"><stop offset="0" stop-color="#66a8f4"/><stop offset="1" stop-color="#4d8ddd"/></linearGradient><linearGradient id="g901b" x1="0" y1="0" x2="0" y2="1"><stop offset="0" stop-color="#3e7ac5"/><stop offset="0.62" stop-color="#3e7ac5"/><stop offset="1" stop-color="#3669ad"/></linearGradient></defs><rect x="0" y="0" width="195" height="42" fill="url(#g901b)"/><path d="M0 0 H195 L191 9 H9 Z" fill="url(#g901a)"/><path d="M0 0 L9 9 V33 L0 42 Z" fill="#3b74bd"/><rect x="0" y="39.5" width="195" height="2.5" fill="#2e5a92"/><rect x="193.8" y="7" width="1.2" height="35" fill="#1f3f78"/></svg>
<span id="t59" class="t" style="transform:scaleX(1.0349);left:930.1px;top:291.57px;font-size:18.7px;color:#fff;font-weight:400;font-family:'Liberation Sans',sans-serif;">MaxDiff Utilities</span>
<svg style="position:absolute;left:1099px;top:279px;" width="201" height="42" viewBox="0 0 201 42"><defs><linearGradient id="g1099a" x1="0" y1="0" x2="0" y2="1"><stop offset="0" stop-color="#fdc45a"/><stop offset="1" stop-color="#f9a63a"/></linearGradient><linearGradient id="g1099b" x1="0" y1="0" x2="0" y2="1"><stop offset="0" stop-color="#f6912d"/><stop offset="0.62" stop-color="#f6912d"/><stop offset="1" stop-color="#e9822a"/></linearGradient></defs><rect x="0" y="0" width="200" height="42" fill="url(#g1099b)"/><path d="M0 0 H200 L196 9 H9 Z" fill="url(#g1099a)"/><path d="M0 0 L9 9 V33 L0 42 Z" fill="#ee8a2c"/><rect x="0" y="39.5" width="200" height="2.5" fill="#c9661a"/><rect x="198.8" y="7" width="1.2" height="35" fill="#b85a10"/></svg>
<span id="t60" class="t" style="transform:scaleX(1.0623);left:1161px;top:294.05px;font-size:13.4px;color:#fff;font-weight:400;font-family:'Liberation Sans',sans-serif;">Preferences</span>
<span id="t61" class="t" style="transform:scaleX(0.9701);left:1353.5px;top:290.54px;font-size:19.2px;color:#fff;font-weight:400;font-family:'Liberation Sans',sans-serif;">Sample Size</span>
<span id="t62" class="t" style="transform:scaleX(1.0151);left:1494.5px;top:290.54px;font-size:19.2px;color:#fff;font-weight:700;font-family:'Liberation Sans',sans-serif;">100</span>
<div style="position:absolute;left:1662px;top:283px;width:217px;height:34px;background:#f2f2f2"></div>
<svg style="position:absolute;left:1662px;top:283px;" width="217" height="34" viewBox="0 0 217 34"><path d="M4 2.75 H11 L17 16.7 L11 30.6 H4 L10 16.7 Z" fill="#8e1212"/><path d="M17.4 2.75 H31.7 V6.5 H22.2 V14.8 H30.5 V18.4 H22.2 V26.9 H31.7 V30.6 H17.4 Z" fill="#15153a"/></svg>
<span id="t63" class="t" style="transform:scaleX(0.9309);left:1700.6px;top:296.31px;font-size:19px;color:#c8171e;font-weight:400;font-family:'Liberation Sans',sans-serif;">KNOWLEDGE</span>
<span id="t64" class="t" style="transform:scaleX(0.8907);left:1821px;top:296.31px;font-size:19px;color:#1c2a66;font-weight:400;font-family:'Liberation Sans',sans-serif;">EXCEL</span>
<div style="position:absolute;left:0px;top:325px;width:1920px;height:628px;background:#d9d9d9"></div>
<div style="position:absolute;left:0px;top:325px;width:1px;height:628px;background:#a6a6a6"></div>
<div style="position:absolute;left:1919px;top:325px;width:1px;height:628px;background:#9a9a9a"></div>
<div style="position:absolute;left:0px;top:393.5px;width:1920px;height:1.2px;background:#a9a9a9"></div>
<div style="position:absolute;left:1337px;top:337px;width:181px;height:43px;border-radius:6px;background:linear-gradient(#6a6a6a 0%,#2a2a2a 8%,#0a0a0a 16%,#070707 84%,#000 92%,#1a1a1a 100%);box-shadow:1px 2px 3px rgba(0,0,0,.35)"></div>
<span id="t65" class="t" style="transform:scaleX(0.8939);left:1400.8px;top:349.54px;font-size:20.5px;color:#fff;font-weight:700;font-family:'Liberation Sans',sans-serif;">Filters</span>
<div style="position:absolute;left:1536px;top:332px;width:149px;height:48px;border:1px solid #222"></div>
<div style="position:absolute;left:1548px;top:328px;width:73.3px;height:8px;background:#d9d9d9"></div>
<span id="t66" class="t" style="transform:scaleX(0.9997);left:1557px;top:330.95px;font-size:16px;color:#111;font-weight:400;font-family:'Liberation Sans',sans-serif;">Weights</span>
<svg style="position:absolute;left:1587px;top:355.2px;" width="19" height="19" viewBox="0 0 19 19"><rect x="0" y="0" width="19" height="19" fill="#fff"/><path d="M18.25 0.75 V18.25 H0.75" fill="none" stroke="#f4f4f4" stroke-width="1.5"/><path d="M1 19 V1 H19" fill="none" stroke="#6a6a6a" stroke-width="2"/><path d="M2.6 17.4 V2.6 H17.4" fill="none" stroke="#a8a8a8" stroke-width="1.2"/></svg>
<span id="t67" class="t" style="transform:scaleX(0.9839);left:1614px;top:357.65px;font-size:16px;color:#111;font-weight:400;font-family:'Liberation Sans',sans-serif;">On</span>
<div style="position:absolute;left:83px;top:370px;width:1051px;height:24px;background:#8db4e2"></div>
<span id="t68" class="t" style="transform:scaleX(0.9500);left:102.4px;top:376.55px;font-size:15.3px;color:#111;font-weight:400;font-family:'Liberation Sans',sans-serif;">SNO</span>
<span id="t69" class="t" style="transform:scaleX(1.1064);left:514px;top:376.55px;font-size:15.3px;color:#111;font-weight:400;font-family:'Liberation Sans',sans-serif;">Attributes</span>
<span id="t70" class="t" style="transform:scaleX(1.0624);left:959px;top:376.55px;font-size:15.3px;color:#111;font-weight:400;font-family:'Liberation Sans',sans-serif;">Preference</span>
<span id="t71" class="t" style="transform:scaleX(0.9799);left:1075.5px;top:376.55px;font-size:15.3px;color:#111;font-weight:400;font-family:'Liberation Sans',sans-serif;">Rank</span>
<div style="position:absolute;left:84px;top:395px;width:1050px;height:396px;background:#fff"></div>
<div style="position:absolute;left:83px;top:790.5px;width:1051px;height:14px;background:#8db4e2"></div>
<svg style="position:absolute;left:89px;top:404.3px;" width="18" height="18" viewBox="0 0 18 18"><rect x="0" y="0" width="18" height="18" fill="#fff"/><path d="M17.4 0.6 V17.4 H0.6" fill="none" stroke="#ececec" stroke-width="1.2"/><path d="M1 18 V1 H18" fill="none" stroke="#787878" stroke-width="2"/><path d="M2.6 16.4 V2.6 H16.4" fill="none" stroke="#b8b8b8" stroke-width="1.2"/><path d="M4.6 6 L7.9 12.6 L14.6 3.8" fill="none" stroke="#000" stroke-width="3" stroke-linejoin="miter"/></svg>
<span id="t72" class="t" style="transform:scaleX(0.8828);left:117.7px;top:403.20px;font-size:16.3px;color:#111;font-weight:400;font-family:'Liberation Sans',sans-serif;">1</span>
<span id="t73" class="t" style="transform:scaleX(1.0207);left:156px;top:403.20px;font-size:16.3px;color:#111;font-weight:400;font-family:'Liberation Sans',sans-serif;">Attribute 1 - This is a long text description placeholders of this attribute</span>
<div style="position:absolute;left:949px;top:396px;width:33.7px;height:28.5px;background:#6690c8"></div>
<span id="t74" class="t" style="transform:scaleX(0.9719);left:972.75px;top:403.20px;font-size:16.3px;color:#111;font-weight:400;font-family:'Liberation Sans',sans-serif;">11.93%</span>
<span id="t75" class="t" style="transform:scaleX(0.8828);left:1088.50px;top:403.20px;font-size:16.3px;color:#111;font-weight:400;font-family:'Liberation Sans',sans-serif;">4</span>
<svg style="position:absolute;left:89px;top:433.5px;" width="18" height="18" viewBox="0 0 18 18"><rect x="0" y="0" width="18" height="18" fill="#fff"/><path d="M17.4 0.6 V17.4 H0.6" fill="none" stroke="#ececec" stroke-width="1.2"/><path d="M1 18 V1 H18" fill="none" stroke="#787878" stroke-width="2"/><path d="M2.6 16.4 V2.6 H16.4" fill="none" stroke="#b8b8b8" stroke-width="1.2"/><path d="M4.6 6 L7.9 12.6 L14.6 3.8" fill="none" stroke="#000" stroke-width="3" stroke-linejoin="miter"/></svg>
<span id="t76" class="t" style="transform:scaleX(0.8828);left:117.7px;top:436.20px;font-size:16.3px;color:#111;font-weight:400;font-family:'Liberation Sans',sans-serif;">2</span>
<span id="t77" class="t" style="transform:scaleX(1.0207);left:156px;top:436.20px;font-size:16.3px;color:#111;font-weight:400;font-family:'Liberation Sans',sans-serif;">Attribute 2 - This is a long text description placeholders of this attribute</span>
<div style="position:absolute;left:949px;top:429px;width:100.0px;height:28.5px;background:#6690c8"></div>
<span id="t78" class="t" style="transform:scaleX(0.9505);left:972.75px;top:436.20px;font-size:16.3px;color:#111;font-weight:400;font-family:'Liberation Sans',sans-serif;">35.36%</span>
<span id="t79" class="t" style="transform:scaleX(0.8828);left:1088.50px;top:436.20px;font-size:16.3px;color:#111;font-weight:400;font-family:'Liberation Sans',sans-serif;">1</span>
<svg style="position:absolute;left:89px;top:466.55px;" width="18" height="18" viewBox="0 0 18 18"><rect x="0" y="0" width="18" height="18" fill="#fff"/><path d="M17.4 0.6 V17.4 H0.6" fill="none" stroke="#ececec" stroke-width="1.2"/><path d="M1 18 V1 H18" fill="none" stroke="#787878" stroke-width="2"/><path d="M2.6 16.4 V2.6 H16.4" fill="none" stroke="#b8b8b8" stroke-width="1.2"/><path d="M4.6 6 L7.9 12.6 L14.6 3.8" fill="none" stroke="#000" stroke-width="3" stroke-linejoin="miter"/></svg>
<span id="t80" class="t" style="transform:scaleX(0.8828);left:117.7px;top:469.20px;font-size:16.3px;color:#111;font-weight:400;font-family:'Liberation Sans',sans-serif;">3</span>
<span id="t81" class="t" style="transform:scaleX(1.0207);left:156px;top:469.20px;font-size:16.3px;color:#111;font-weight:400;font-family:'Liberation Sans',sans-serif;">Attribute 3 - This is a long text description placeholders of this attribute</span>
<div style="position:absolute;left:949px;top:462px;width:11.7px;height:28.5px;background:#6690c8"></div>
<span id="t82" class="t" style="transform:scaleX(0.9530);left:977.00px;top:469.20px;font-size:16.3px;color:#111;font-weight:400;font-family:'Liberation Sans',sans-serif;">4.12%</span>
<span id="t83" class="t" style="transform:scaleX(0.8828);left:1088.50px;top:469.20px;font-size:16.3px;color:#111;font-weight:400;font-family:'Liberation Sans',sans-serif;">6</span>
<svg style="position:absolute;left:89px;top:499.6px;" width="18" height="18" viewBox="0 0 18 18"><rect x="0" y="0" width="18" height="18" fill="#fff"/><path d="M17.4 0.6 V17.4 H0.6" fill="none" stroke="#ececec" stroke-width="1.2"/><path d="M1 18 V1 H18" fill="none" stroke="#787878" stroke-width="2"/><path d="M2.6 16.4 V2.6 H16.4" fill="none" stroke="#b8b8b8" stroke-width="1.2"/><path d="M4.6 6 L7.9 12.6 L14.6 3.8" fill="none" stroke="#000" stroke-width="3" stroke-linejoin="miter"/></svg>
<span id="t84" class="t" style="transform:scaleX(0.8828);left:117.7px;top:502.20px;font-size:16.3px;color:#111;font-weight:400;font-family:'Liberation Sans',sans-serif;">4</span>
<span id="t85" class="t" style="transform:scaleX(1.0207);left:156px;top:502.20px;font-size:16.3px;color:#111;font-weight:400;font-family:'Liberation Sans',sans-serif;">Attribute 4 - This is a long text description placeholders of this attribute</span>
<div style="position:absolute;left:949px;top:495px;width:8.5px;height:28.5px;background:#6690c8"></div>
<span id="t86" class="t" style="transform:scaleX(0.9530);left:977.00px;top:502.20px;font-size:16.3px;color:#111;font-weight:400;font-family:'Liberation Sans',sans-serif;">2.99%</span>
<span id="t87" class="t" style="transform:scaleX(0.8828);left:1088.50px;top:502.20px;font-size:16.3px;color:#111;font-weight:400;font-family:'Liberation Sans',sans-serif;">7</span>
<svg style="position:absolute;left:89px;top:532.65px;" width="18" height="18" viewBox="0 0 18 18"><rect x="0" y="0" width="18" height="18" fill="#fff"/><path d="M17.4 0.6 V17.4 H0.6" fill="none" stroke="#ececec" stroke-width="1.2"/><path d="M1 18 V1 H18" fill="none" stroke="#787878" stroke-width="2"/><path d="M2.6 16.4 V2.6 H16.4" fill="none" stroke="#b8b8b8" stroke-width="1.2"/><path d="M4.6 6 L7.9 12.6 L14.6 3.8" fill="none" stroke="#000" stroke-width="3" stroke-linejoin="miter"/></svg>
<span id="t88" class="t" style="transform:scaleX(0.8828);left:117.7px;top:535.20px;font-size:16.3px;color:#111;font-weight:400;font-family:'Liberation Sans',sans-serif;">5</span>
<span id="t89" class="t" style="transform:scaleX(1.0207);left:156px;top:535.20px;font-size:16.3px;color:#111;font-weight:400;font-family:'Liberation Sans',sans-serif;">Attribute 5 - This is a long text description placeholders of this attribute</span>
<div style="position:absolute;left:949px;top:528px;width:8.1px;height:28.5px;background:#6690c8"></div>
<span id="t90" class="t" style="transform:scaleX(0.9530);left:977.00px;top:535.20px;font-size:16.3px;color:#111;font-weight:400;font-family:'Liberation Sans',sans-serif;">2.87%</span>
<span id="t91" class="t" style="transform:scaleX(0.8828);left:1088.50px;top:535.20px;font-size:16.3px;color:#111;font-weight:400;font-family:'Liberation Sans',sans-serif;">8</span>
<svg style="position:absolute;left:89px;top:565.7px;" width="18" height="18" viewBox="0 0 18 18"><rect x="0" y="0" width="18" height="18" fill="#fff"/><path d="M17.4 0.6 V17.4 H0.6" fill="none" stroke="#ececec" stroke-width="1.2"/><path d="M1 18 V1 H18" fill="none" stroke="#787878" stroke-width="2"/><path d="M2.6 16.4 V2.6 H16.4" fill="none" stroke="#b8b8b8" stroke-width="1.2"/><path d="M4.6 6 L7.9 12.6 L14.6 3.8" fill="none" stroke="#000" stroke-width="3" stroke-linejoin="miter"/></svg>
<span id="t92" class="t" style="transform:scaleX(0.8828);left:117.7px;top:568.20px;font-size:16.3px;color:#111;font-weight:400;font-family:'Liberation Sans',sans-serif;">6</span>
<span id="t93" class="t" style="transform:scaleX(1.0195);left:156px;top:568.20px;font-size:16.3px;color:#111;font-weight:400;font-family:'Liberation Sans',sans-serif;">Attribute 6  - This is a long text description placeholders of this attribute</span>
<div style="position:absolute;left:949px;top:561px;width:3.1px;height:28.5px;background:#6690c8"></div>
<span id="t94" class="t" style="transform:scaleX(0.9530);left:977.00px;top:568.20px;font-size:16.3px;color:#111;font-weight:400;font-family:'Liberation Sans',sans-serif;">1.10%</span>
<span id="t95" class="t" style="transform:scaleX(0.9760);left:1084.25px;top:568.20px;font-size:16.3px;color:#111;font-weight:400;font-family:'Liberation Sans',sans-serif;">11</span>
<svg style="position:absolute;left:89px;top:598.75px;" width="18" height="18" viewBox="0 0 18 18"><rect x="0" y="0" width="18" height="18" fill="#fff"/><path d="M17.4 0.6 V17.4 H0.6" fill="none" stroke="#ececec" stroke-width="1.2"/><path d="M1 18 V1 H18" fill="none" stroke="#787878" stroke-width="2"/><path d="M2.6 16.4 V2.6 H16.4" fill="none" stroke="#b8b8b8" stroke-width="1.2"/><path d="M4.6 6 L7.9 12.6 L14.6 3.8" fill="none" stroke="#000" stroke-width="3" stroke-linejoin="miter"/></svg>
<span id="t96" class="t" style="transform:scaleX(0.8828);left:117.7px;top:601.20px;font-size:16.3px;color:#111;font-weight:400;font-family:'Liberation Sans',sans-serif;">7</span>
<span id="t97" class="t" style="transform:scaleX(1.0207);left:156px;top:601.20px;font-size:16.3px;color:#111;font-weight:400;font-family:'Liberation Sans',sans-serif;">Attribute 7 - This is a long text description placeholders of this attribute</span>
<div style="position:absolute;left:949px;top:594px;width:1.5px;height:28.5px;background:#6690c8"></div>
<span id="t98" class="t" style="transform:scaleX(0.9530);left:977.00px;top:601.20px;font-size:16.3px;color:#111;font-weight:400;font-family:'Liberation Sans',sans-serif;">0.53%</span>
<span id="t99" class="t" style="transform:scaleX(0.9103);left:1084.25px;top:601.20px;font-size:16.3px;color:#111;font-weight:400;font-family:'Liberation Sans',sans-serif;">12</span>
<svg style="position:absolute;left:89px;top:631.8px;" width="18" height="18" viewBox="0 0 18 18"><rect x="0" y="0" width="18" height="18" fill="#fff"/><path d="M17.4 0.6 V17.4 H0.6" fill="none" stroke="#ececec" stroke-width="1.2"/><path d="M1 18 V1 H18" fill="none" stroke="#787878" stroke-width="2"/><path d="M2.6 16.4 V2.6 H16.4" fill="none" stroke="#b8b8b8" stroke-width="1.2"/><path d="M4.6 6 L7.9 12.6 L14.6 3.8" fill="none" stroke="#000" stroke-width="3" stroke-linejoin="miter"/></svg>
<span id="t100" class="t" style="transform:scaleX(0.8828);left:117.7px;top:634.20px;font-size:16.3px;color:#111;font-weight:400;font-family:'Liberation Sans',sans-serif;">8</span>
<span id="t101" class="t" style="transform:scaleX(1.0207);left:156px;top:634.20px;font-size:16.3px;color:#111;font-weight:400;font-family:'Liberation Sans',sans-serif;">Attribute 8 - This is a long text description placeholders of this attribute</span>
<div style="position:absolute;left:949px;top:627px;width:33.9px;height:28.5px;background:#6690c8"></div>
<span id="t102" class="t" style="transform:scaleX(0.9505);left:972.75px;top:634.20px;font-size:16.3px;color:#111;font-weight:400;font-family:'Liberation Sans',sans-serif;">12.00%</span>
<span id="t103" class="t" style="transform:scaleX(0.8828);left:1088.50px;top:634.20px;font-size:16.3px;color:#111;font-weight:400;font-family:'Liberation Sans',sans-serif;">3</span>
<svg style="position:absolute;left:89px;top:664.8499999999999px;" width="18" height="18" viewBox="0 0 18 18"><rect x="0" y="0" width="18" height="18" fill="#fff"/><path d="M17.4 0.6 V17.4 H0.6" fill="none" stroke="#ececec" stroke-width="1.2"/><path d="M1 18 V1 H18" fill="none" stroke="#787878" stroke-width="2"/><path d="M2.6 16.4 V2.6 H16.4" fill="none" stroke="#b8b8b8" stroke-width="1.2"/><path d="M4.6 6 L7.9 12.6 L14.6 3.8" fill="none" stroke="#000" stroke-width="3" stroke-linejoin="miter"/></svg>
<span id="t104" class="t" style="transform:scaleX(0.8828);left:117.7px;top:667.20px;font-size:16.3px;color:#111;font-weight:400;font-family:'Liberation Sans',sans-serif;">9</span>
<span id="t105" class="t" style="transform:scaleX(1.0207);left:156px;top:667.20px;font-size:16.3px;color:#111;font-weight:400;font-family:'Liberation Sans',sans-serif;">Attribute 9 - This is a long text description placeholders of this attribute</span>
<div style="position:absolute;left:949px;top:660px;width:50.2px;height:28.5px;background:#6690c8"></div>
<span id="t106" class="t" style="transform:scaleX(0.9505);left:972.75px;top:667.20px;font-size:16.3px;color:#111;font-weight:400;font-family:'Liberation Sans',sans-serif;">17.76%</span>
<span id="t107" class="t" style="transform:scaleX(0.8828);left:1088.50px;top:667.20px;font-size:16.3px;color:#111;font-weight:400;font-family:'Liberation Sans',sans-serif;">2</span>
<svg style="position:absolute;left:89px;top:697.9px;" width="18" height="18" viewBox="0 0 18 18"><rect x="0" y="0" width="18" height="18" fill="#fff"/><path d="M17.4 0.6 V17.4 H0.6" fill="none" stroke="#ececec" stroke-width="1.2"/><path d="M1 18 V1 H18" fill="none" stroke="#787878" stroke-width="2"/><path d="M2.6 16.4 V2.6 H16.4" fill="none" stroke="#b8b8b8" stroke-width="1.2"/><path d="M4.6 6 L7.9 12.6 L14.6 3.8" fill="none" stroke="#000" stroke-width="3" stroke-linejoin="miter"/></svg>
<span id="t108" class="t" style="transform:scaleX(0.9103);left:117.7px;top:700.20px;font-size:16.3px;color:#111;font-weight:400;font-family:'Liberation Sans',sans-serif;">10</span>
<span id="t109" class="t" style="transform:scaleX(1.0193);left:156px;top:700.20px;font-size:16.3px;color:#111;font-weight:400;font-family:'Liberation Sans',sans-serif;">Attribute 10 - This is a long text description placeholders of this attribute</span>
<div style="position:absolute;left:949px;top:693px;width:18.9px;height:28.5px;background:#6690c8"></div>
<span id="t110" class="t" style="transform:scaleX(0.9530);left:977.00px;top:700.20px;font-size:16.3px;color:#111;font-weight:400;font-family:'Liberation Sans',sans-serif;">6.68%</span>
<span id="t111" class="t" style="transform:scaleX(0.8828);left:1088.50px;top:700.20px;font-size:16.3px;color:#111;font-weight:400;font-family:'Liberation Sans',sans-serif;">5</span>
<svg style="position:absolute;left:89px;top:730.95px;" width="18" height="18" viewBox="0 0 18 18"><rect x="0" y="0" width="18" height="18" fill="#fff"/><path d="M17.4 0.6 V17.4 H0.6" fill="none" stroke="#ececec" stroke-width="1.2"/><path d="M1 18 V1 H18" fill="none" stroke="#787878" stroke-width="2"/><path d="M2.6 16.4 V2.6 H16.4" fill="none" stroke="#b8b8b8" stroke-width="1.2"/><path d="M4.6 6 L7.9 12.6 L14.6 3.8" fill="none" stroke="#000" stroke-width="3" stroke-linejoin="miter"/></svg>
<span id="t112" class="t" style="transform:scaleX(0.9760);left:117.7px;top:733.20px;font-size:16.3px;color:#111;font-weight:400;font-family:'Liberation Sans',sans-serif;">11</span>
<span id="t113" class="t" style="transform:scaleX(1.0217);left:156px;top:733.20px;font-size:16.3px;color:#111;font-weight:400;font-family:'Liberation Sans',sans-serif;">Attribute 11 - This is a long text description placeholders of this attribute</span>
<div style="position:absolute;left:949px;top:726px;width:7.4px;height:28.5px;background:#6690c8"></div>
<span id="t114" class="t" style="transform:scaleX(0.9530);left:977.00px;top:733.20px;font-size:16.3px;color:#111;font-weight:400;font-family:'Liberation Sans',sans-serif;">2.63%</span>
<span id="t115" class="t" style="transform:scaleX(0.8828);left:1088.50px;top:733.20px;font-size:16.3px;color:#111;font-weight:400;font-family:'Liberation Sans',sans-serif;">9</span>
<svg style="position:absolute;left:88px;top:764.0px;" width="18" height="18" viewBox="0 0 18 18"><rect x="0" y="0" width="18" height="18" fill="#fff"/><path d="M17.4 0.6 V17.4 H0.6" fill="none" stroke="#ececec" stroke-width="1.2"/><path d="M1 18 V1 H18" fill="none" stroke="#787878" stroke-width="2"/><path d="M2.6 16.4 V2.6 H16.4" fill="none" stroke="#b8b8b8" stroke-width="1.2"/><path d="M4.6 6 L7.9 12.6 L14.6 3.8" fill="none" stroke="#000" stroke-width="3" stroke-linejoin="miter"/></svg>
<span id="t116" class="t" style="transform:scaleX(0.9103);left:117.7px;top:766.20px;font-size:16.3px;color:#111;font-weight:400;font-family:'Liberation Sans',sans-serif;">12</span>
<span id="t117" class="t" style="transform:scaleX(1.0193);left:156px;top:766.20px;font-size:16.3px;color:#111;font-weight:400;font-family:'Liberation Sans',sans-serif;">Attribute 12 - This is a long text description placeholders of this attribute</span>
<div style="position:absolute;left:949px;top:759px;width:5.8px;height:28.5px;background:#6690c8"></div>
<span id="t118" class="t" style="transform:scaleX(0.9530);left:977.00px;top:766.20px;font-size:16.3px;color:#111;font-weight:400;font-family:'Liberation Sans',sans-serif;">2.05%</span>
<span id="t119" class="t" style="transform:scaleX(0.9103);left:1084.25px;top:766.20px;font-size:16.3px;color:#111;font-weight:400;font-family:'Liberation Sans',sans-serif;">10</span>
<div style="position:absolute;left:1204px;top:406.5px;width:141px;height:75px;border:1px solid #1a1a1a;box-sizing:border-box"></div>
<div style="position:absolute;left:1215px;top:405.5px;width:68.5px;height:3px;background:#d9d9d9"></div>
<span id="t120" class="t" style="transform:scaleX(0.9864);left:1225px;top:405.38px;font-size:15.5px;color:#111;font-weight:400;font-family:'Liberation Sans',sans-serif;">Gender</span>
<div style="position:absolute;left:1355px;top:406.5px;width:486px;height:75px;border:1px solid #1a1a1a;box-sizing:border-box"></div>
<div style="position:absolute;left:1366px;top:405.5px;width:44.5px;height:3px;background:#d9d9d9"></div>
<span id="t121" class="t" style="transform:scaleX(0.9966);left:1376px;top:405.38px;font-size:15.5px;color:#111;font-weight:400;font-family:'Liberation Sans',sans-serif;">Age</span>
<div style="position:absolute;left:1204px;top:500.5px;width:360px;height:190.5px;border:1px solid #1a1a1a;box-sizing:border-box"></div>
<div style="position:absolute;left:1215px;top:499.5px;width:86px;height:3px;background:#d9d9d9"></div>
<span id="t122" class="t" style="transform:scaleX(1.0007);left:1225px;top:499.38px;font-size:15.5px;color:#111;font-weight:400;font-family:'Liberation Sans',sans-serif;">Education</span>
<div style="position:absolute;left:1573px;top:500.5px;width:266px;height:191px;border:1px solid #1a1a1a;box-sizing:border-box"></div>
<div style="position:absolute;left:1582.5px;top:499.5px;width:113.5px;height:3px;background:#d9d9d9"></div>
<span id="t123" class="t" style="transform:scaleX(1.0183);left:1593px;top:499.38px;font-size:15.5px;color:#111;font-weight:400;font-family:'Liberation Sans',sans-serif;">Marital Status</span>
<svg style="position:absolute;left:1222px;top:425px;" width="19" height="19" viewBox="0 0 19 19"><rect x="0" y="0" width="19" height="19" fill="#fff"/><path d="M18.25 0.75 V18.25 H0.75" fill="none" stroke="#f4f4f4" stroke-width="1.5"/><path d="M1 19 V1 H19" fill="none" stroke="#6a6a6a" stroke-width="2"/><path d="M2.6 17.4 V2.6 H17.4" fill="none" stroke="#a8a8a8" stroke-width="1.2"/><g transform="translate(0.4,0.6)"><path d="M4.6 6 L7.9 12.6 L14.6 3.8" fill="none" stroke="#000" stroke-width="3" stroke-linejoin="miter"/></g></svg>
<span id="t124" class="t" style="transform:scaleX(0.9802);left:1249.3px;top:426.05px;font-size:16px;color:#111;font-weight:400;font-family:'Liberation Sans',sans-serif;">Male</span>
<svg style="position:absolute;left:1222px;top:449px;" width="19" height="19" viewBox="0 0 19 19"><rect x="0" y="0" width="19" height="19" fill="#fff"/><path d="M18.25 0.75 V18.25 H0.75" fill="none" stroke="#f4f4f4" stroke-width="1.5"/><path d="M1 19 V1 H19" fill="none" stroke="#6a6a6a" stroke-width="2"/><path d="M2.6 17.4 V2.6 H17.4" fill="none" stroke="#a8a8a8" stroke-width="1.2"/><g transform="translate(0.4,0.6)"><path d="M4.6 6 L7.9 12.6 L14.6 3.8" fill="none" stroke="#000" stroke-width="3" stroke-linejoin="miter"/></g></svg>
<span id="t125" class="t" style="transform:scaleX(0.9370);left:1249.3px;top:449.75px;font-size:16px;color:#111;font-weight:400;font-family:'Liberation Sans',sans-serif;">Female</span>
<svg style="position:absolute;left:1380px;top:424px;" width="19" height="19" viewBox="0 0 19 19"><rect x="0" y="0" width="19" height="19" fill="#fff"/><path d="M18.25 0.75 V18.25 H0.75" fill="none" stroke="#f4f4f4" stroke-width="1.5"/><path d="M1 19 V1 H19" fill="none" stroke="#6a6a6a" stroke-width="2"/><path d="M2.6 17.4 V2.6 H17.4" fill="none" stroke="#a8a8a8" stroke-width="1.2"/><g transform="translate(0.4,0.6)"><path d="M4.6 6 L7.9 12.6 L14.6 3.8" fill="none" stroke="#000" stroke-width="3" stroke-linejoin="miter"/></g></svg>
<span id="t126" class="t" style="transform:scaleX(1.0294);left:1407px;top:426.33px;font-size:15.2px;color:#111;font-weight:400;font-family:'Liberation Sans',sans-serif;">18-24</span>
<svg style="position:absolute;left:1380px;top:452px;" width="19" height="19" viewBox="0 0 19 19"><rect x="0" y="0" width="19" height="19" fill="#fff"/><path d="M18.25 0.75 V18.25 H0.75" fill="none" stroke="#f4f4f4" stroke-width="1.5"/><path d="M1 19 V1 H19" fill="none" stroke="#6a6a6a" stroke-width="2"/><path d="M2.6 17.4 V2.6 H17.4" fill="none" stroke="#a8a8a8" stroke-width="1.2"/><g transform="translate(0.4,0.6)"><path d="M4.6 6 L7.9 12.6 L14.6 3.8" fill="none" stroke="#000" stroke-width="3" stroke-linejoin="miter"/></g></svg>
<span id="t127" class="t" style="transform:scaleX(1.0294);left:1407px;top:454.33px;font-size:15.2px;color:#111;font-weight:400;font-family:'Liberation Sans',sans-serif;">25-29</span>
<svg style="position:absolute;left:1454px;top:424px;" width="19" height="19" viewBox="0 0 19 19"><rect x="0" y="0" width="19" height="19" fill="#fff"/><path d="M18.25 0.75 V18.25 H0.75" fill="none" stroke="#f4f4f4" stroke-width="1.5"/><path d="M1 19 V1 H19" fill="none" stroke="#6a6a6a" stroke-width="2"/><path d="M2.6 17.4 V2.6 H17.4" fill="none" stroke="#a8a8a8" stroke-width="1.2"/><g transform="translate(0.4,0.6)"><path d="M4.6 6 L7.9 12.6 L14.6 3.8" fill="none" stroke="#000" stroke-width="3" stroke-linejoin="miter"/></g></svg>
<span id="t128" class="t" style="transform:scaleX(1.0294);left:1481px;top:426.33px;font-size:15.2px;color:#111;font-weight:400;font-family:'Liberation Sans',sans-serif;">30-34</span>
<svg style="position:absolute;left:1454px;top:452px;" width="19" height="19" viewBox="0 0 19 19"><rect x="0" y="0" width="19" height="19" fill="#fff"/><path d="M18.25 0.75 V18.25 H0.75" fill="none" stroke="#f4f4f4" stroke-width="1.5"/><path d="M1 19 V1 H19" fill="none" stroke="#6a6a6a" stroke-width="2"/><path d="M2.6 17.4 V2.6 H17.4" fill="none" stroke="#a8a8a8" stroke-width="1.2"/><g transform="translate(0.4,0.6)"><path d="M4.6 6 L7.9 12.6 L14.6 3.8" fill="none" stroke="#000" stroke-width="3" stroke-linejoin="miter"/></g></svg>
<span id="t129" class="t" style="transform:scaleX(1.0294);left:1481px;top:454.33px;font-size:15.2px;color:#111;font-weight:400;font-family:'Liberation Sans',sans-serif;">35-39</span>
<svg style="position:absolute;left:1527.4px;top:424px;" width="19" height="19" viewBox="0 0 19 19"><rect x="0" y="0" width="19" height="19" fill="#fff"/><path d="M18.25 0.75 V18.25 H0.75" fill="none" stroke="#f4f4f4" stroke-width="1.5"/><path d="M1 19 V1 H19" fill="none" stroke="#6a6a6a" stroke-width="2"/><path d="M2.6 17.4 V2.6 H17.4" fill="none" stroke="#a8a8a8" stroke-width="1.2"/><g transform="translate(0.4,0.6)"><path d="M4.6 6 L7.9 12.6 L14.6 3.8" fill="none" stroke="#000" stroke-width="3" stroke-linejoin="miter"/></g></svg>
<span id="t130" class="t" style="transform:scaleX(1.0294);left:1554.4px;top:426.33px;font-size:15.2px;color:#111;font-weight:400;font-family:'Liberation Sans',sans-serif;">40-44</span>
<svg style="position:absolute;left:1527.4px;top:452px;" width="19" height="19" viewBox="0 0 19 19"><rect x="0" y="0" width="19" height="19" fill="#fff"/><path d="M18.25 0.75 V18.25 H0.75" fill="none" stroke="#f4f4f4" stroke-width="1.5"/><path d="M1 19 V1 H19" fill="none" stroke="#6a6a6a" stroke-width="2"/><path d="M2.6 17.4 V2.6 H17.4" fill="none" stroke="#a8a8a8" stroke-width="1.2"/><g transform="translate(0.4,0.6)"><path d="M4.6 6 L7.9 12.6 L14.6 3.8" fill="none" stroke="#000" stroke-width="3" stroke-linejoin="miter"/></g></svg>
<span id="t131" class="t" style="transform:scaleX(1.0294);left:1554.4px;top:454.33px;font-size:15.2px;color:#111;font-weight:400;font-family:'Liberation Sans',sans-serif;">45-49</span>
<svg style="position:absolute;left:1599px;top:424px;" width="19" height="19" viewBox="0 0 19 19"><rect x="0" y="0" width="19" height="19" fill="#fff"/><path d="M18.25 0.75 V18.25 H0.75" fill="none" stroke="#f4f4f4" stroke-width="1.5"/><path d="M1 19 V1 H19" fill="none" stroke="#6a6a6a" stroke-width="2"/><path d="M2.6 17.4 V2.6 H17.4" fill="none" stroke="#a8a8a8" stroke-width="1.2"/><g transform="translate(0.4,0.6)"><path d="M4.6 6 L7.9 12.6 L14.6 3.8" fill="none" stroke="#000" stroke-width="3" stroke-linejoin="miter"/></g></svg>
<span id="t132" class="t" style="transform:scaleX(1.0294);left:1626px;top:426.33px;font-size:15.2px;color:#111;font-weight:400;font-family:'Liberation Sans',sans-serif;">50-54</span>
<svg style="position:absolute;left:1599px;top:452px;" width="19" height="19" viewBox="0 0 19 19"><rect x="0" y="0" width="19" height="19" fill="#fff"/><path d="M18.25 0.75 V18.25 H0.75" fill="none" stroke="#f4f4f4" stroke-width="1.5"/><path d="M1 19 V1 H19" fill="none" stroke="#6a6a6a" stroke-width="2"/><path d="M2.6 17.4 V2.6 H17.4" fill="none" stroke="#a8a8a8" stroke-width="1.2"/><g transform="translate(0.4,0.6)"><path d="M4.6 6 L7.9 12.6 L14.6 3.8" fill="none" stroke="#000" stroke-width="3" stroke-linejoin="miter"/></g></svg>
<span id="t133" class="t" style="transform:scaleX(1.0294);left:1626px;top:454.33px;font-size:15.2px;color:#111;font-weight:400;font-family:'Liberation Sans',sans-serif;">55-59</span>
<svg style="position:absolute;left:1672.6px;top:424px;" width="19" height="19" viewBox="0 0 19 19"><rect x="0" y="0" width="19" height="19" fill="#fff"/><path d="M18.25 0.75 V18.25 H0.75" fill="none" stroke="#f4f4f4" stroke-width="1.5"/><path d="M1 19 V1 H19" fill="none" stroke="#6a6a6a" stroke-width="2"/><path d="M2.6 17.4 V2.6 H17.4" fill="none" stroke="#a8a8a8" stroke-width="1.2"/><g transform="translate(0.4,0.6)"><path d="M4.6 6 L7.9 12.6 L14.6 3.8" fill="none" stroke="#000" stroke-width="3" stroke-linejoin="miter"/></g></svg>
<span id="t134" class="t" style="transform:scaleX(1.0294);left:1699.6px;top:426.33px;font-size:15.2px;color:#111;font-weight:400;font-family:'Liberation Sans',sans-serif;">60-64</span>
<svg style="position:absolute;left:1672.6px;top:452px;" width="19" height="19" viewBox="0 0 19 19"><rect x="0" y="0" width="19" height="19" fill="#fff"/><path d="M18.25 0.75 V18.25 H0.75" fill="none" stroke="#f4f4f4" stroke-width="1.5"/><path d="M1 19 V1 H19" fill="none" stroke="#6a6a6a" stroke-width="2"/><path d="M2.6 17.4 V2.6 H17.4" fill="none" stroke="#a8a8a8" stroke-width="1.2"/><g transform="translate(0.4,0.6)"><path d="M4.6 6 L7.9 12.6 L14.6 3.8" fill="none" stroke="#000" stroke-width="3" stroke-linejoin="miter"/></g></svg>
<span id="t135" class="t" style="transform:scaleX(1.0294);left:1699.6px;top:454.33px;font-size:15.2px;color:#111;font-weight:400;font-family:'Liberation Sans',sans-serif;">65-69</span>
<svg style="position:absolute;left:1744px;top:424px;" width="19" height="19" viewBox="0 0 19 19"><rect x="0" y="0" width="19" height="19" fill="#fff"/><path d="M18.25 0.75 V18.25 H0.75" fill="none" stroke="#f4f4f4" stroke-width="1.5"/><path d="M1 19 V1 H19" fill="none" stroke="#6a6a6a" stroke-width="2"/><path d="M2.6 17.4 V2.6 H17.4" fill="none" stroke="#a8a8a8" stroke-width="1.2"/><g transform="translate(0.4,0.6)"><path d="M4.6 6 L7.9 12.6 L14.6 3.8" fill="none" stroke="#000" stroke-width="3" stroke-linejoin="miter"/></g></svg>
<span id="t136" class="t" style="transform:scaleX(1.0294);left:1771px;top:426.33px;font-size:15.2px;color:#111;font-weight:400;font-family:'Liberation Sans',sans-serif;">70-74</span>
<svg style="position:absolute;left:1744px;top:452px;" width="19" height="19" viewBox="0 0 19 19"><rect x="0" y="0" width="19" height="19" fill="#fff"/><path d="M18.25 0.75 V18.25 H0.75" fill="none" stroke="#f4f4f4" stroke-width="1.5"/><path d="M1 19 V1 H19" fill="none" stroke="#6a6a6a" stroke-width="2"/><path d="M2.6 17.4 V2.6 H17.4" fill="none" stroke="#a8a8a8" stroke-width="1.2"/><g transform="translate(0.4,0.6)"><path d="M4.6 6 L7.9 12.6 L14.6 3.8" fill="none" stroke="#000" stroke-width="3" stroke-linejoin="miter"/></g></svg>
<span id="t137" class="t" style="transform:scaleX(1.0294);left:1771px;top:454.33px;font-size:15.2px;color:#111;font-weight:400;font-family:'Liberation Sans',sans-serif;">75-88</span>
<svg style="position:absolute;left:1212.2px;top:515.4px;" width="19" height="19" viewBox="0 0 19 19"><rect x="0" y="0" width="19" height="19" fill="#fff"/><path d="M18.25 0.75 V18.25 H0.75" fill="none" stroke="#f4f4f4" stroke-width="1.5"/><path d="M1 19 V1 H19" fill="none" stroke="#6a6a6a" stroke-width="2"/><path d="M2.6 17.4 V2.6 H17.4" fill="none" stroke="#a8a8a8" stroke-width="1.2"/><g transform="translate(0.4,0.6)"><path d="M4.6 6 L7.9 12.6 L14.6 3.8" fill="none" stroke="#000" stroke-width="3" stroke-linejoin="miter"/></g></svg>
<span id="t138" class="t" style="transform:scaleX(0.9687);left:1239px;top:516.18px;font-size:16.2px;color:#111;font-weight:400;font-family:'Liberation Sans',sans-serif;">Some high school or less</span>
<svg style="position:absolute;left:1212.2px;top:540.75px;" width="19" height="19" viewBox="0 0 19 19"><rect x="0" y="0" width="19" height="19" fill="#fff"/><path d="M18.25 0.75 V18.25 H0.75" fill="none" stroke="#f4f4f4" stroke-width="1.5"/><path d="M1 19 V1 H19" fill="none" stroke="#6a6a6a" stroke-width="2"/><path d="M2.6 17.4 V2.6 H17.4" fill="none" stroke="#a8a8a8" stroke-width="1.2"/><g transform="translate(0.4,0.6)"><path d="M4.6 6 L7.9 12.6 L14.6 3.8" fill="none" stroke="#000" stroke-width="3" stroke-linejoin="miter"/></g></svg>
<span id="t139" class="t" style="transform:scaleX(0.9615);left:1239px;top:541.53px;font-size:16.2px;color:#111;font-weight:400;font-family:'Liberation Sans',sans-serif;">High school degree or equivalent (i.e., GED)</span>
<svg style="position:absolute;left:1212.2px;top:566.1px;" width="19" height="19" viewBox="0 0 19 19"><rect x="0" y="0" width="19" height="19" fill="#fff"/><path d="M18.25 0.75 V18.25 H0.75" fill="none" stroke="#f4f4f4" stroke-width="1.5"/><path d="M1 19 V1 H19" fill="none" stroke="#6a6a6a" stroke-width="2"/><path d="M2.6 17.4 V2.6 H17.4" fill="none" stroke="#a8a8a8" stroke-width="1.2"/><g transform="translate(0.4,0.6)"><path d="M4.6 6 L7.9 12.6 L14.6 3.8" fill="none" stroke="#000" stroke-width="3" stroke-linejoin="miter"/></g></svg>
<span id="t140" class="t" style="transform:scaleX(0.9829);left:1239px;top:566.88px;font-size:16.2px;color:#111;font-weight:400;font-family:'Liberation Sans',sans-serif;">Some college - no degree</span>
<svg style="position:absolute;left:1212.2px;top:591.45px;" width="19" height="19" viewBox="0 0 19 19"><rect x="0" y="0" width="19" height="19" fill="#fff"/><path d="M18.25 0.75 V18.25 H0.75" fill="none" stroke="#f4f4f4" stroke-width="1.5"/><path d="M1 19 V1 H19" fill="none" stroke="#6a6a6a" stroke-width="2"/><path d="M2.6 17.4 V2.6 H17.4" fill="none" stroke="#a8a8a8" stroke-width="1.2"/><g transform="translate(0.4,0.6)"><path d="M4.6 6 L7.9 12.6 L14.6 3.8" fill="none" stroke="#000" stroke-width="3" stroke-linejoin="miter"/></g></svg>
<span id="t141" class="t" style="transform:scaleX(0.9796);left:1239px;top:592.23px;font-size:16.2px;color:#111;font-weight:400;font-family:'Liberation Sans',sans-serif;">2-yr col/tech deg(e.g., asso deg or certificate)</span>
<svg style="position:absolute;left:1212.2px;top:616.8px;" width="19" height="19" viewBox="0 0 19 19"><rect x="0" y="0" width="19" height="19" fill="#fff"/><path d="M18.25 0.75 V18.25 H0.75" fill="none" stroke="#f4f4f4" stroke-width="1.5"/><path d="M1 19 V1 H19" fill="none" stroke="#6a6a6a" stroke-width="2"/><path d="M2.6 17.4 V2.6 H17.4" fill="none" stroke="#a8a8a8" stroke-width="1.2"/><g transform="translate(0.4,0.6)"><path d="M4.6 6 L7.9 12.6 L14.6 3.8" fill="none" stroke="#000" stroke-width="3" stroke-linejoin="miter"/></g></svg>
<span id="t142" class="t" style="transform:scaleX(0.9688);left:1239px;top:617.58px;font-size:16.2px;color:#111;font-weight:400;font-family:'Liberation Sans',sans-serif;">4-year college degree (i.e., bachelor degree)</span>
<svg style="position:absolute;left:1212.2px;top:642.15px;" width="19" height="19" viewBox="0 0 19 19"><rect x="0" y="0" width="19" height="19" fill="#fff"/><path d="M18.25 0.75 V18.25 H0.75" fill="none" stroke="#f4f4f4" stroke-width="1.5"/><path d="M1 19 V1 H19" fill="none" stroke="#6a6a6a" stroke-width="2"/><path d="M2.6 17.4 V2.6 H17.4" fill="none" stroke="#a8a8a8" stroke-width="1.2"/><g transform="translate(0.4,0.6)"><path d="M4.6 6 L7.9 12.6 L14.6 3.8" fill="none" stroke="#000" stroke-width="3" stroke-linejoin="miter"/></g></svg>
<span id="t143" class="t" style="transform:scaleX(0.9715);left:1239px;top:642.93px;font-size:16.2px;color:#111;font-weight:400;font-family:'Liberation Sans',sans-serif;">Graduate deg(e.g., master deg, doctorate deg)</span>
<svg style="position:absolute;left:1212.2px;top:667.5px;" width="19" height="19" viewBox="0 0 19 19"><rect x="0" y="0" width="19" height="19" fill="#fff"/><path d="M18.25 0.75 V18.25 H0.75" fill="none" stroke="#f4f4f4" stroke-width="1.5"/><path d="M1 19 V1 H19" fill="none" stroke="#6a6a6a" stroke-width="2"/><path d="M2.6 17.4 V2.6 H17.4" fill="none" stroke="#a8a8a8" stroke-width="1.2"/><g transform="translate(0.4,0.6)"><path d="M4.6 6 L7.9 12.6 L14.6 3.8" fill="none" stroke="#000" stroke-width="3" stroke-linejoin="miter"/></g></svg>
<span id="t144" class="t" style="transform:scaleX(0.9810);left:1239px;top:668.28px;font-size:16.2px;color:#111;font-weight:400;font-family:'Liberation Sans',sans-serif;">Prefer not to answer</span>
<svg style="position:absolute;left:1581.3px;top:522.8000000000001px;" width="19" height="19" viewBox="0 0 19 19"><rect x="0" y="0" width="19" height="19" fill="#fff"/><path d="M18.25 0.75 V18.25 H0.75" fill="none" stroke="#f4f4f4" stroke-width="1.5"/><path d="M1 19 V1 H19" fill="none" stroke="#6a6a6a" stroke-width="2"/><path d="M2.6 17.4 V2.6 H17.4" fill="none" stroke="#a8a8a8" stroke-width="1.2"/><g transform="translate(0.4,0.6)"><path d="M4.6 6 L7.9 12.6 L14.6 3.8" fill="none" stroke="#000" stroke-width="3" stroke-linejoin="miter"/></g></svg>
<span id="t145" class="t" style="transform:scaleX(0.9986);left:1608px;top:523.88px;font-size:16.2px;color:#111;font-weight:400;font-family:'Liberation Sans',sans-serif;">Married</span>
<svg style="position:absolute;left:1581.3px;top:551.1500000000001px;" width="19" height="19" viewBox="0 0 19 19"><rect x="0" y="0" width="19" height="19" fill="#fff"/><path d="M18.25 0.75 V18.25 H0.75" fill="none" stroke="#f4f4f4" stroke-width="1.5"/><path d="M1 19 V1 H19" fill="none" stroke="#6a6a6a" stroke-width="2"/><path d="M2.6 17.4 V2.6 H17.4" fill="none" stroke="#a8a8a8" stroke-width="1.2"/><g transform="translate(0.4,0.6)"><path d="M4.6 6 L7.9 12.6 L14.6 3.8" fill="none" stroke="#000" stroke-width="3" stroke-linejoin="miter"/></g></svg>
<span id="t146" class="t" style="transform:scaleX(0.9961);left:1608px;top:552.23px;font-size:16.2px;color:#111;font-weight:400;font-family:'Liberation Sans',sans-serif;">Living with a partner, not arried</span>
<svg style="position:absolute;left:1581.3px;top:579.5000000000001px;" width="19" height="19" viewBox="0 0 19 19"><rect x="0" y="0" width="19" height="19" fill="#fff"/><path d="M18.25 0.75 V18.25 H0.75" fill="none" stroke="#f4f4f4" stroke-width="1.5"/><path d="M1 19 V1 H19" fill="none" stroke="#6a6a6a" stroke-width="2"/><path d="M2.6 17.4 V2.6 H17.4" fill="none" stroke="#a8a8a8" stroke-width="1.2"/><g transform="translate(0.4,0.6)"><path d="M4.6 6 L7.9 12.6 L14.6 3.8" fill="none" stroke="#000" stroke-width="3" stroke-linejoin="miter"/></g></svg>
<span id="t147" class="t" style="transform:scaleX(0.9958);left:1608px;top:580.58px;font-size:16.2px;color:#111;font-weight:400;font-family:'Liberation Sans',sans-serif;">Widowed</span>
<svg style="position:absolute;left:1581.3px;top:607.8500000000001px;" width="19" height="19" viewBox="0 0 19 19"><rect x="0" y="0" width="19" height="19" fill="#fff"/><path d="M18.25 0.75 V18.25 H0.75" fill="none" stroke="#f4f4f4" stroke-width="1.5"/><path d="M1 19 V1 H19" fill="none" stroke="#6a6a6a" stroke-width="2"/><path d="M2.6 17.4 V2.6 H17.4" fill="none" stroke="#a8a8a8" stroke-width="1.2"/><g transform="translate(0.4,0.6)"><path d="M4.6 6 L7.9 12.6 L14.6 3.8" fill="none" stroke="#000" stroke-width="3" stroke-linejoin="miter"/></g></svg>
<span id="t148" class="t" style="transform:scaleX(0.9675);left:1608px;top:608.93px;font-size:16.2px;color:#111;font-weight:400;font-family:'Liberation Sans',sans-serif;">Divorced</span>
<svg style="position:absolute;left:1581.3px;top:636.2px;" width="19" height="19" viewBox="0 0 19 19"><rect x="0" y="0" width="19" height="19" fill="#fff"/><path d="M18.25 0.75 V18.25 H0.75" fill="none" stroke="#f4f4f4" stroke-width="1.5"/><path d="M1 19 V1 H19" fill="none" stroke="#6a6a6a" stroke-width="2"/><path d="M2.6 17.4 V2.6 H17.4" fill="none" stroke="#a8a8a8" stroke-width="1.2"/><g transform="translate(0.4,0.6)"><path d="M4.6 6 L7.9 12.6 L14.6 3.8" fill="none" stroke="#000" stroke-width="3" stroke-linejoin="miter"/></g></svg>
<span id="t149" class="t" style="transform:scaleX(0.9437);left:1608px;top:637.28px;font-size:16.2px;color:#111;font-weight:400;font-family:'Liberation Sans',sans-serif;">Separated</span>
<svg style="position:absolute;left:1581.3px;top:664.5500000000001px;" width="19" height="19" viewBox="0 0 19 19"><rect x="0" y="0" width="19" height="19" fill="#fff"/><path d="M18.25 0.75 V18.25 H0.75" fill="none" stroke="#f4f4f4" stroke-width="1.5"/><path d="M1 19 V1 H19" fill="none" stroke="#6a6a6a" stroke-width="2"/><path d="M2.6 17.4 V2.6 H17.4" fill="none" stroke="#a8a8a8" stroke-width="1.2"/><g transform="translate(0.4,0.6)"><path d="M4.6 6 L7.9 12.6 L14.6 3.8" fill="none" stroke="#000" stroke-width="3" stroke-linejoin="miter"/></g></svg>
<span id="t150" class="t" style="transform:scaleX(0.9750);left:1608px;top:665.63px;font-size:16.2px;color:#111;font-weight:400;font-family:'Liberation Sans',sans-serif;">Never married</span>
<div style="position:absolute;left:0px;top:953px;width:1920px;height:35px;background:#e6e6e6"></div>
<div style="position:absolute;left:0px;top:953px;width:1888px;height:1.2px;background:#a8a8a8"></div>
<div style="position:absolute;left:1888px;top:953px;width:32px;height:35px;background:#e6e6e6"></div>
<div style="position:absolute;left:0px;top:987px;width:1920px;height:2px;background:#c6c6c6"></div>
<svg style="position:absolute;left:28px;top:962px;" width="9" height="14" viewBox="0 0 9 14"><path d="M8 1 L2 7 L8 13 Z" fill="#c4c4c4"/></svg>
<svg style="position:absolute;left:62px;top:962px;" width="9" height="14" viewBox="0 0 9 14"><path d="M1 1 L7 7 L1 13 Z" fill="#c4c4c4"/></svg>
<div style="position:absolute;left:118.6px;top:957px;width:1.2px;height:26px;background:#9a9a9a"></div>
<div style="position:absolute;left:188.4px;top:957px;width:1.2px;height:26px;background:#9a9a9a"></div>
<div style="position:absolute;left:289.8px;top:957px;width:1.2px;height:26px;background:#9a9a9a"></div>
<div style="position:absolute;left:409.3px;top:957px;width:1.2px;height:26px;background:#9a9a9a"></div>
<div style="position:absolute;left:579.5px;top:957px;width:1.2px;height:26px;background:#9a9a9a"></div>
<div style="position:absolute;left:743.5px;top:957px;width:1.2px;height:26px;background:#9a9a9a"></div>
<div style="position:absolute;left:902.4px;top:957px;width:1.2px;height:26px;background:#9a9a9a"></div>
<span id="t151" class="t" style="transform:scaleX(1.0167);left:132.3px;top:957.57px;font-size:20px;color:#444;font-weight:400;font-family:'Liberation Sans',sans-serif;">Intro</span>
<span id="t152" class="t" style="transform:scaleX(0.9390);left:202.6px;top:957.57px;font-size:20px;color:#444;font-weight:400;font-family:'Liberation Sans',sans-serif;">ReadMe</span>
<span id="t153" class="t" style="transform:scaleX(1.0215);left:305.3px;top:957.57px;font-size:20px;color:#444;font-weight:400;font-family:'Liberation Sans',sans-serif;">Attributes</span>
<span id="t154" class="t" style="transform:scaleX(0.9854);left:428.5px;top:957.57px;font-size:20px;color:#444;font-weight:400;font-family:'Liberation Sans',sans-serif;">Maxdiff Design</span>
<span id="t155" class="t" style="transform:scaleX(0.9597);left:596.4px;top:957.57px;font-size:20px;color:#444;font-weight:400;font-family:'Liberation Sans',sans-serif;">Data Summary</span>
<span id="t156" class="t" style="transform:scaleX(0.9708);left:759.5px;top:957.57px;font-size:20px;color:#444;font-weight:400;font-family:'Liberation Sans',sans-serif;">Counts Report</span>
<span id="t157" class="t" style="transform:scaleX(1.0147);left:923.5px;top:957.57px;font-size:20px;color:#444;font-weight:400;font-family:'Liberation Sans',sans-serif;">Maxdiff Utilities</span>
<div style="position:absolute;left:1081px;top:953px;width:225px;height:34px;background:#fff;border-left:1px solid #a0a0a0;border-right:1px solid #a0a0a0;box-sizing:border-box"></div>
<div style="position:absolute;left:1081px;top:981.8px;width:225px;height:2px;background:#217346"></div>
<span id="t158" class="t" style="transform:scaleX(1.0097);left:1093.6px;top:957.57px;font-size:20px;color:#217346;font-weight:700;font-family:'Liberation Sans',sans-serif;">Max Diff Preferences</span>
<svg style="position:absolute;left:1345px;top:959px;" width="22" height="22" viewBox="0 0 22 22"><circle cx="11" cy="11" r="10" fill="none" stroke="#c4c4c4" stroke-width="1.3"/><path d="M11 5.5 V16.5 M5.5 11 H16.5" stroke="#c4c4c4" stroke-width="1.3"/></svg>
<div style="position:absolute;left:0px;top:988px;width:1920px;height:32px;background:#f3f2f1"></div>
<div style="position:absolute;left:0px;top:987px;width:1920px;height:2px;background:#c6c6c6"></div>
<svg style="position:absolute;left:12px;top:994px;" width="22" height="20" viewBox="0 0 22 20"><path d="M7.5 18.5 H1 V1 H21 V6" fill="none" stroke="#3c3c3c" stroke-width="1.6"/><line x1="1" y1="3.8" x2="21" y2="3.8" stroke="#3c3c3c" stroke-width="1.4"/><path d="M3.5 6.5 H7.5 M3.5 9.8 H6.5 M3.5 12.8 H6.5" stroke="#3c3c3c" stroke-width="1.2"/><circle cx="14.6" cy="12.5" r="5.9" fill="#f3f2f1" stroke="#3c3c3c" stroke-width="1.6"/><circle cx="14.6" cy="12.5" r="2.6" fill="#3c3c3c"/></svg>
<div style="position:absolute;left:1468px;top:988px;width:60px;height:32px;background:#c8c6c4"></div>
<svg style="position:absolute;left:1487.5px;top:992.5px;" width="20" height="19" viewBox="0 0 20 19"><rect x="1" y="1" width="18" height="17" fill="none" stroke="#444" stroke-width="1.4"/><line x1="7.0" y1="1" x2="7.0" y2="18" stroke="#444" stroke-width="1.2"/><line x1="1" y1="6.7" x2="19" y2="6.7" stroke="#444" stroke-width="1.2"/><line x1="13.0" y1="1" x2="13.0" y2="18" stroke="#444" stroke-width="1.2"/><line x1="1" y1="12.3" x2="19" y2="12.3" stroke="#444" stroke-width="1.2"/></svg>
<svg style="position:absolute;left:1548px;top:992.5px;" width="21" height="19" viewBox="0 0 21 19"><rect x="1" y="1" width="19" height="17" fill="none" stroke="#444" stroke-width="1.4"/><rect x="5" y="4" width="11" height="11" fill="none" stroke="#444" stroke-width="1.2"/><path d="M7 7 H14 M7 9.5 H14 M7 12 H14" stroke="#444" stroke-width="1"/></svg>
<svg style="position:absolute;left:1607px;top:992.5px;" width="22" height="19" viewBox="0 0 22 19"><rect x="1" y="1" width="20" height="17" fill="none" stroke="#444" stroke-width="1.4"/><path d="M8 1 V10 H14 V1" fill="none" stroke="#444" stroke-width="1.3"/></svg>
<div style="position:absolute;left:1658px;top:1002px;width:11.5px;height:1.3px;background:#555"></div>
<div style="position:absolute;left:1678.5px;top:1002px;width:148.5px;height:1.2px;background:#9a9a9a"></div>
<div style="position:absolute;left:1749px;top:994.5px;width:8px;height:17px;background:#6b6b6b"></div>
<div style="position:absolute;left:1836px;top:1002px;width:11.5px;height:1.3px;background:#555"></div>
<div style="position:absolute;left:1841.1px;top:996.5px;width:1.3px;height:11.5px;background:#555"></div>
<span id="t159" class="t" style="transform:scaleX(0.9194);left:1868.6px;top:995.03px;font-size:16.5px;color:#555;font-weight:400;font-family:'Liberation Sans',sans-serif;">100%</span>
<div style="position:absolute;left:0px;top:1020px;width:1920px;height:60px;background:#dedac7"></div>
<svg style="position:absolute;left:23.5px;top:1037.5px;" width="25" height="25" viewBox="0 0 25 25"><path d="M0.3 3.5 L10.2 2.1 V11.3 H0.3 Z M11.5 1.9 L24.5 0.2 V11.3 H11.5 Z M0.3 12.5 H10.2 V21.9 L0.3 20.5 Z M11.5 12.5 H24.5 V24.3 L11.5 22.3 Z" fill="#000"/></svg>
<div style="position:absolute;left:72px;top:1020.5px;width:515px;height:59.5px;background:#fff;border:1.5px solid #c9c9c9;border-bottom:none;box-sizing:border-box"></div>
<svg style="position:absolute;left:89px;top:1037px;" width="27" height="25" viewBox="0 0 27 25"><circle cx="16.5" cy="9.5" r="7.5" fill="none" stroke="#111" stroke-width="1.6"/><line x1="11" y1="15" x2="1.5" y2="24" stroke="#111" stroke-width="1.7"/></svg>
<span id="t160" class="t" style="transform:scaleX(0.9485);left:131.5px;top:1041.10px;font-size:23.5px;color:#2b2b2b;font-weight:400;font-family:'Liberation Sans',sans-serif;">Type here to search</span>
<div style="position:absolute;left:598px;top:1032.5px;width:1.4px;height:33.5px;background:#111"></div>
<div style="position:absolute;left:601.2px;top:1032.5px;width:1.4px;height:33.5px;background:#111"></div>
<div style="position:absolute;left:686px;top:1020px;width:58px;height:60px;background:#efebdf"></div>
<div style="position:absolute;left:743.5px;top:1020px;width:4px;height:60px;background:#d0ccbf"></div>
<div style="position:absolute;left:626px;top:1077px;width:52.5px;height:3px;background:#0c78d4"></div>
<div style="position:absolute;left:686px;top:1077px;width:58px;height:3px;background:#0c78d4"></div>
<div style="position:absolute;left:757.5px;top:1077px;width:52.5px;height:3px;background:#0c78d4"></div>
<div style="position:absolute;left:823.5px;top:1077px;width:52.5px;height:3px;background:#0c78d4"></div>
<div style="position:absolute;left:890px;top:1077px;width:52.5px;height:3px;background:#0c78d4"></div>
<div style="position:absolute;left:955px;top:1077px;width:52.5px;height:3px;background:#0c78d4"></div>
<div style="position:absolute;left:1022px;top:1077px;width:51px;height:3px;background:#0c78d4"></div>
<div style="position:absolute;left:1087px;top:1077px;width:51px;height:3px;background:#0c78d4"></div>
<div style="position:absolute;left:1152px;top:1077px;width:51px;height:3px;background:#0c78d4"></div>
<div style="position:absolute;left:1217px;top:1077px;width:51px;height:3px;background:#0c78d4"></div>
<div style="position:absolute;left:1282px;top:1077px;width:51px;height:3px;background:#0c78d4"></div>
<div style="position:absolute;left:1347px;top:1077px;width:51px;height:3px;background:#0c78d4"></div>
<div style="position:absolute;left:1412px;top:1077px;width:51px;height:3px;background:#0c78d4"></div>
<svg style="position:absolute;left:636px;top:1036px;" width="33" height="28" viewBox="0 0 33 28"><path d="M1 3 Q1 1 3 1 H11 L14 4 H30 Q32 4 32 6 V25 Q32 27 30 27 H3 Q1 27 1 25 Z" fill="#f6c443"/><path d="M1 4 H12 L14.5 6.5 H1 Z" fill="#e8912b"/><path d="M1 8 H32 V25 Q32 27 30 27 H3 Q1 27 1 25 Z" fill="#fad776"/><path d="M7 27 V17 H26 V27 H21 V22 H12 V27 Z" fill="#3b8ee0"/></svg>
<svg style="position:absolute;left:697px;top:1036px;" width="37" height="33" viewBox="0 0 37 33"><rect x="8" y="0" width="28" height="32" rx="2" fill="#1e7145"/><rect x="8" y="0" width="28" height="8" fill="#33c481" rx="2"/><rect x="22" y="8" width="14" height="8" fill="#21a366"/><rect x="8" y="8" width="14" height="8" fill="#21a366"/><rect x="22" y="16" width="14" height="8" fill="#185c37"/><rect x="0" y="7" width="19" height="19" rx="1.5" fill="#107c41"/><path d="M5 11 L14 22 M14 11 L5 22" stroke="#fff" stroke-width="2.4"/></svg>
<svg style="position:absolute;left:766px;top:1034px;" width="34" height="34" viewBox="0 0 34 34"><circle cx="17" cy="17" r="16.5" fill="#db4437"/><path d="M17 17 L31.3 8.75 A16.5 16.5 0 0 1 17 33.5 Z" fill="#fcc934"/><path d="M17 17 L17 33.5 A16.5 16.5 0 0 1 2.7 8.75 Z" fill="#1e8e3e"/><path d="M17 17 L2.7 8.75 A16.5 16.5 0 0 1 17 0.5 Z" fill="#db4437"/><circle cx="17" cy="17" r="7.5" fill="#fff"/><circle cx="17" cy="17" r="6" fill="#4e8ff0"/></svg>
<svg style="position:absolute;left:831px;top:1034px;" width="41" height="37" viewBox="0 0 41 37"><rect x="9" y="1" width="24" height="28" rx="2" fill="#0a64c8"/><rect x="20" y="4" width="13" height="14" fill="#28a8ea"/><path d="M17 21 H40 V36 H17 Z" fill="#e6b86a"/><path d="M17 21 L28.5 30 L40 21" fill="none" stroke="#fff" stroke-width="1.5"/><rect x="0" y="8" width="19" height="19" rx="2" fill="#0f78d4"/><ellipse cx="9.5" cy="17.5" rx="5" ry="6" fill="none" stroke="#fff" stroke-width="2.5"/></svg>
<svg style="position:absolute;left:897px;top:1034px;" width="37" height="34" viewBox="0 0 37 34"><circle cx="20" cy="17" r="16.5" fill="#d35230"/><path d="M20 17 V0.5 A16.5 16.5 0 0 1 36.5 17 Z" fill="#ff8f6b"/><rect x="0" y="8" width="19" height="19" rx="2" fill="#c43e1c"/><path d="M6 23 V12 H10.5 Q14 12 14 15.5 Q14 19 10.5 19 H6" fill="none" stroke="#fff" stroke-width="2.3"/></svg>
<svg style="position:absolute;left:964px;top:1034px;" width="37" height="35" viewBox="0 0 37 35"><rect x="8" y="0" width="28" height="34" rx="2" fill="#185abd"/><rect x="8" y="0" width="28" height="9" fill="#41a5ee" rx="2"/><rect x="8" y="9" width="28" height="8" fill="#2b7cd3"/><rect x="0" y="8" width="19" height="19" rx="2" fill="#185abd"/><path d="M3.5 12 L6.5 23 L9.5 15 L12.5 23 L15.5 12" fill="none" stroke="#fff" stroke-width="2"/></svg>
<svg style="position:absolute;left:1029px;top:1034px;" width="36" height="32" viewBox="0 0 36 32"><path d="M6 4 C16 -2 26 4 18 14 C10 24 24 30 33 26 C24 33 8 30 14 18 C20 8 14 2 6 4 Z" fill="#8f1e1e"/><circle cx="9" cy="9" r="7.5" fill="#222"/><circle cx="9" cy="9" r="3" fill="#ddd"/><circle cx="26" cy="23" r="7.5" fill="#222"/><circle cx="26" cy="23" r="3" fill="#ddd"/></svg>
<svg style="position:absolute;left:1094px;top:1034px;" width="36" height="34" viewBox="0 0 36 34"><ellipse cx="16" cy="10" rx="15" ry="9" fill="#fff4f0" stroke="#e35b4b" stroke-width="1.6"/><path d="M12 4 L22 20 M24 4 L16 20" stroke="#666" stroke-width="1.4"/><circle cx="16" cy="26" r="5" fill="none" stroke="#1e88e5" stroke-width="2"/><circle cx="29" cy="25" r="5" fill="none" stroke="#1e88e5" stroke-width="2"/></svg>
<svg style="position:absolute;left:1160px;top:1034px;" width="34" height="34" viewBox="0 0 34 34"><circle cx="17" cy="17" r="15.5" fill="#1e96de"/><circle cx="8" cy="8" r="7" fill="#1e96de"/><circle cx="26" cy="26" r="7" fill="#1e96de"/><path d="M22 11 Q17 7 12.5 10 Q9.5 13 14 15.5 L20 18 Q24 20.5 21 24 Q16.5 27 11 23" fill="none" stroke="#fff" stroke-width="3" stroke-linecap="round"/></svg>
<svg style="position:absolute;left:1223px;top:1033px;" width="37" height="37" viewBox="0 0 37 37"><circle cx="18.5" cy="18.5" r="18" fill="#186fa0"/><path d="M6 24 L10 14 L14 24 L19 10 L24 24 L28 12 L33 24 Q20 21 6 24 Z" fill="none" stroke="#fff" stroke-width="1.4"/></svg>
<svg style="position:absolute;left:1290px;top:1033px;" width="34" height="34" viewBox="0 0 34 34"><rect x="0" y="0" width="34" height="34" fill="#c8170f"/><rect x="0" y="20" width="34" height="14" fill="#9a0e0a"/><path d="M15 5 Q17 3 17 8 Q16 15 8 26 Q6 29 9 27 Q16 21 29 20 Q32 21 28 22 Q20 21 15 12 Q14 8 15 5 Z" fill="none" stroke="#fff" stroke-width="1.5"/></svg>
<svg style="position:absolute;left:1353px;top:1033px;" width="38" height="36" viewBox="0 0 38 36"><path d="M2 1 H37 V10 H31 V6 H24 V34 H28 V36 H10 V34 H15 V6 H8 V10 H2 Z" fill="#2e7bd6" stroke="#174f9a" stroke-width="1"/><rect x="2" y="13" width="17" height="20" fill="#eee" stroke="#555" stroke-width="1.2"/><path d="M5 18 H15 M5 22 H15 M5 26 H12" stroke="#777" stroke-width="1"/><path d="M14 14 L33 26 L30 30 L11 18 Z" fill="#f4c542" stroke="#a36a00" stroke-width="1"/></svg>
<svg style="position:absolute;left:1418px;top:1033px;" width="38" height="36" viewBox="0 0 38 36"><path d="M3 18 Q2 6 16 5 Q30 5 29 15 Q28 22 22 22 Q18 22 19 27 Q20 33 12 32 Q4 30 3 18 Z" fill="#cfe0f0" stroke="#8aa9c4" stroke-width="1"/><circle cx="9" cy="13" r="2.6" fill="#e04a3a"/><circle cx="15" cy="9" r="2.6" fill="#4aa04a"/><circle cx="22" cy="10" r="2.6" fill="#f0c030"/><circle cx="10" cy="21" r="2.6" fill="#3a7ad0"/><path d="M13 33 L33 3" stroke="#e08a20" stroke-width="3"/><path d="M31 6 L36 0 L37 5 Z" fill="#b07030"/></svg>
<svg style="position:absolute;left:1487px;top:1036px;" width="40" height="34" viewBox="0 0 40 34"><circle cx="16" cy="15" r="15" fill="#fff"/><circle cx="16" cy="15" r="13" fill="#1a8ad8"/><path d="M11 11 Q11 6 16 6 Q21 6 21 10.5 Q21 13.5 17.5 15 V18" fill="none" stroke="#fff" stroke-width="3"/><rect x="15.5" y="20" width="3.5" height="3.5" fill="#fff"/><circle cx="27" cy="26" r="7" fill="#f59c25" stroke="#fff" stroke-width="1.5"/><rect x="26" y="24" width="2" height="6" fill="#fff"/><rect x="26" y="21" width="2" height="2" fill="#fff"/></svg>
<svg style="position:absolute;left:1536px;top:1044px;" width="20" height="11" viewBox="0 0 20 11"><path d="M1 10 L10 1.5 L19 10" fill="none" stroke="#111" stroke-width="1.6"/></svg>
<div style="position:absolute;left:1570px;top:1038.5px;width:24px;height:23px;background:#222"></div>
<span id="t161" class="t" style="transform:scaleX(0.8994);left:1572px;top:1047.53px;font-size:10px;color:#ddd;font-weight:400;font-family:'Liberation Sans',sans-serif;">B&amp;O</span>
<svg style="position:absolute;left:1609px;top:1038px;" width="21" height="20" viewBox="0 0 21 20"><path d="M1 19 A18 18 0 0 1 19 1 M5 19 A14 14 0 0 1 19 5 M9 19 A10 10 0 0 1 19 9" fill="none" stroke="#222" stroke-width="1.4"/><circle cx="18" cy="18" r="1.8" fill="#222"/></svg>
<svg style="position:absolute;left:1641px;top:1039px;" width="27" height="18" viewBox="0 0 27 18"><path d="M2 1 V5 M6 1 V5 M1 5 H7 V8 Q7 11 4 11 V14 H10" fill="none" stroke="#111" stroke-width="1.4"/><rect x="7" y="5" width="17" height="12" fill="#111"/><rect x="24" y="8.5" width="2.5" height="5" fill="#111"/></svg>
<span id="t162" class="t" style="transform:scaleX(0.8407);left:1682.6px;top:1040.96px;font-size:18px;color:#111;font-weight:400;font-family:'Liberation Sans',sans-serif;">ENG</span>
<span id="t163" class="t" style="transform:scaleX(0.9213);left:1762.5px;top:1027.36px;font-size:18px;color:#111;font-weight:400;font-family:'Liberation Sans',sans-serif;">19:32</span>
<span id="t164" class="t" style="transform:scaleX(1.0398);left:1737px;top:1055.46px;font-size:18px;color:#111;font-weight:400;font-family:'Liberation Sans',sans-serif;">18/11/2019</span>
<svg style="position:absolute;left:1857px;top:1037px;" width="26" height="22" viewBox="0 0 26 22"><path d="M1 1 H24 V17 H8 L3 21 V17 H1 Z" fill="#111"/><path d="M5 6 H20 M5 9.5 H20 M5 13 H17" stroke="#fff" stroke-width="1.2"/></svg>
<div style="position:absolute;left:1868px;top:1049px;width:24px;height:24px;border-radius:50%;background:#c8c8c8;border:1px solid #888;box-sizing:border-box"></div>
<span id="t165" class="t" style="transform:scaleX(0.9513);left:1871px;top:1053.61px;font-size:17px;color:#111;font-weight:400;font-family:'Liberation Sans',sans-serif;">27</span>
<div style="position:absolute;left:1912.5px;top:1020px;width:1.2px;height:60px;background:#aaa"></div>
</body></html>
